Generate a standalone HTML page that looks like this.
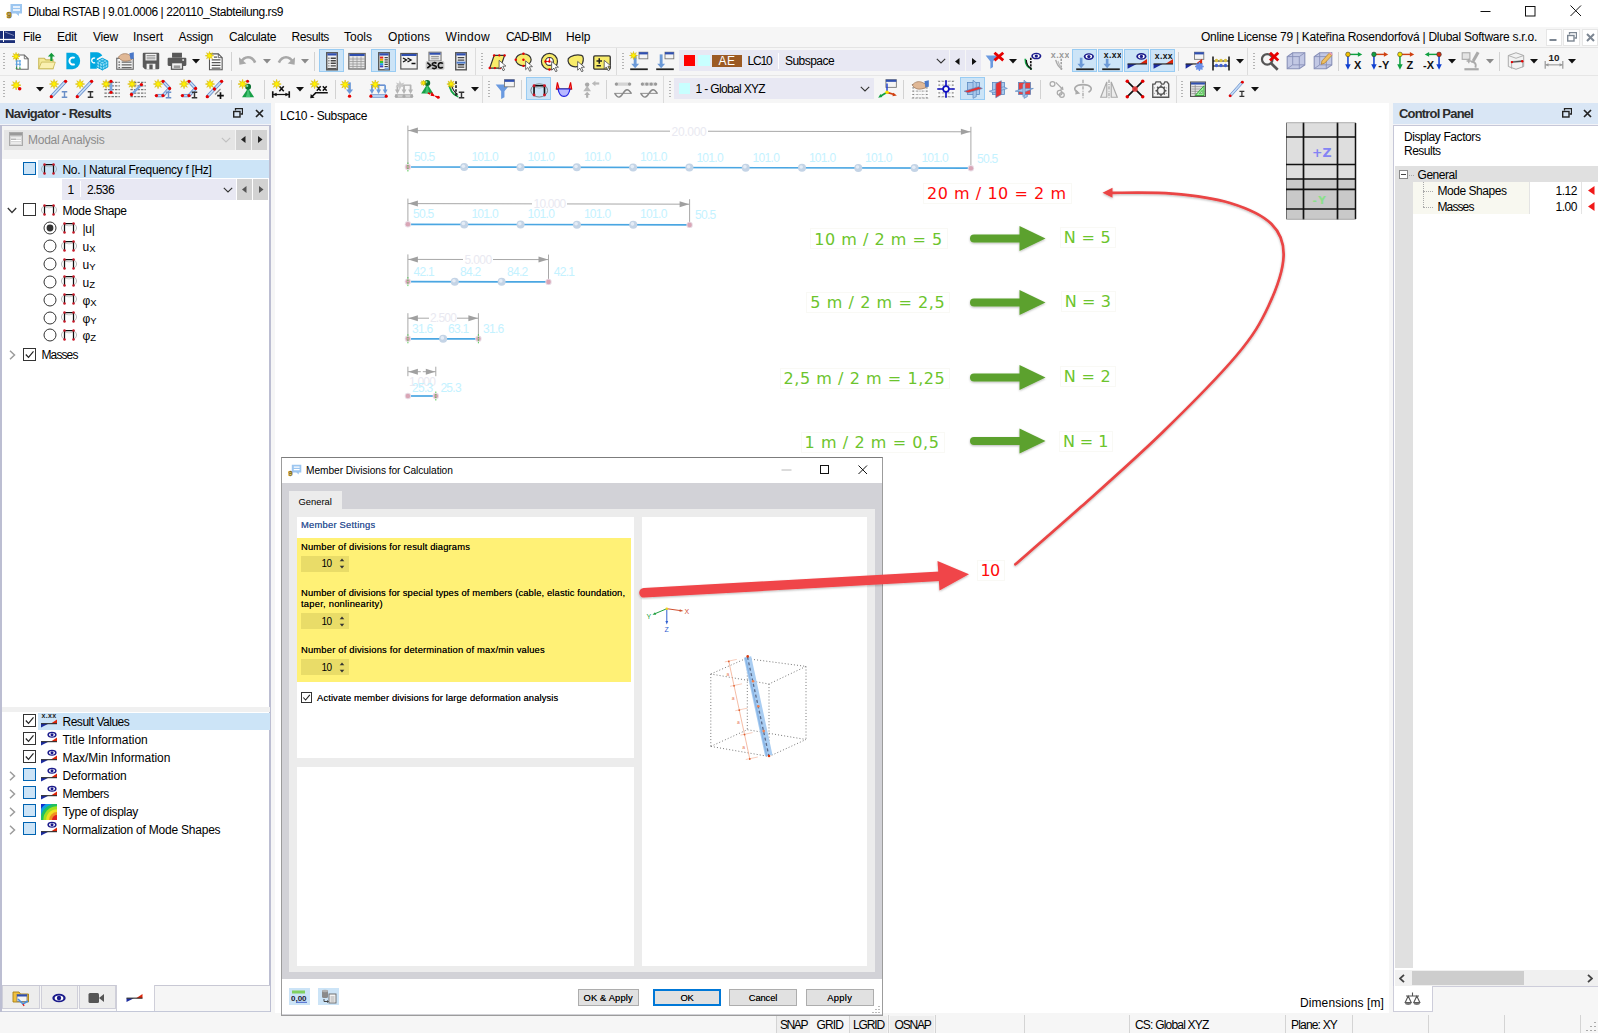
<!DOCTYPE html>
<html lang="en"><head><meta charset="utf-8"><title>Dlubal RSTAB</title><style>
html,body{margin:0;padding:0;background:#f6f6f6;}
#app{position:relative;width:1598px;height:1033px;overflow:hidden;background:#f6f6f6;font-family:"Liberation Sans",sans-serif;font-size:12px;color:#000;}
.b{position:absolute;display:block;}
.t{position:absolute;white-space:pre;font-family:"Liberation Sans",sans-serif;}
</style></head><body><div id="app">
<svg width="0" height="0" style="position:absolute"><defs><filter id="sh" x="-10%" y="-10%" width="120%" height="130%"><feDropShadow dx="0" dy="1" stdDeviation="1.2" flood-color="#000" flood-opacity=".28"/></filter></defs></svg>
<div class="b" style="left:0px;top:0px;width:1598px;height:26.5px;background:#fff;"></div>
<svg class="b" style="left:6px;top:3px;" width="17" height="16" viewBox="0 0 17 16"><path d="M4.500 1h11.500v9.500h-3v2.500l-3-2.500h-5.500z" fill="#9cc6f0"/><path d="M7 4h7M7 7h7" stroke="#fff" stroke-width="1.500"/><text x="0.500" y="15" font-size="9.500" font-weight="bold" fill="#e0b020" stroke="#6a5410" stroke-width=".5" font-family="Liberation Sans, sans-serif">9</text></svg>
<span class="t" style="left:28.0px;top:4.0px;font-size:12px;line-height:16px;color:#000;letter-spacing:-0.414px;">Dlubal RSTAB | 9.01.0006 | 220110_Stabteilung.rs9</span>
<svg class="b" style="left:1480px;top:5px;" width="12" height="12" viewBox="0 0 12 12"><path d="M0.500 6.500h10" stroke="#111" stroke-width="1"/></svg>
<svg class="b" style="left:1525px;top:6px;" width="11" height="11" viewBox="0 0 11 11"><rect x="0.500" y="0.500" width="9.500" height="9.500" fill="none" stroke="#111" stroke-width="1"/></svg>
<svg class="b" style="left:1570px;top:5px;" width="12" height="12" viewBox="0 0 12 12"><path d="M0.500 0.500l10.500 10.500M11 0.500l-10.500 10.500" stroke="#111" stroke-width="1"/></svg>
<div class="b" style="left:0px;top:26.5px;width:1598px;height:21.5px;background:#f6f6f6;"></div>
<div class="b" style="left:0px;top:47px;width:1598px;height:1px;background:#e4e4e4;"></div>
<svg class="b" style="left:0px;top:31px;" width="15" height="12" viewBox="0 0 15 12"><rect x="0" y="0" width="15" height="12" fill="#1c2f78"/><path d="M0 8.500h15" stroke="#fff" stroke-width="1.300"/><path d="M3.500 0v11" stroke="#fff" stroke-width="1"/><path d="M5 1l9 3.500" stroke="#dde" stroke-width=".5"/></svg>
<span class="t" style="left:23.0px;top:28.8px;font-size:12px;line-height:16px;color:#000;letter-spacing:-0.334px;">File</span>
<span class="t" style="left:57.0px;top:28.8px;font-size:12px;line-height:16px;color:#000;letter-spacing:-0.169px;">Edit</span>
<span class="t" style="left:93.0px;top:28.8px;font-size:12px;line-height:16px;color:#000;letter-spacing:-0.198px;">View</span>
<span class="t" style="left:133.0px;top:28.8px;font-size:12px;line-height:16px;color:#000;letter-spacing:-0.002px;">Insert</span>
<span class="t" style="left:178.5px;top:28.8px;font-size:12px;line-height:16px;color:#000;letter-spacing:-0.253px;">Assign</span>
<span class="t" style="left:229.0px;top:28.8px;font-size:12px;line-height:16px;color:#000;letter-spacing:-0.336px;">Calculate</span>
<span class="t" style="left:291.5px;top:28.8px;font-size:12px;line-height:16px;color:#000;letter-spacing:-0.359px;">Results</span>
<span class="t" style="left:344.0px;top:28.8px;font-size:12px;line-height:16px;color:#000;letter-spacing:-0.002px;">Tools</span>
<span class="t" style="left:388.0px;top:28.8px;font-size:12px;line-height:16px;color:#000;letter-spacing:0.092px;">Options</span>
<span class="t" style="left:445.5px;top:28.8px;font-size:12px;line-height:16px;color:#000;letter-spacing:0.304px;">Window</span>
<span class="t" style="left:506.0px;top:28.8px;font-size:12px;line-height:16px;color:#000;letter-spacing:-0.809px;">CAD-BIM</span>
<span class="t" style="left:566.0px;top:28.8px;font-size:12px;line-height:16px;color:#000;letter-spacing:-0.045px;">Help</span>
<span class="t" style="left:1201.0px;top:28.8px;font-size:12px;line-height:16px;color:#000;letter-spacing:-0.249px;">Online License 79 | Kateřina Rosendorfová | Dlubal Software s.r.o.</span>
<div class="b" style="left:1545.5px;top:29px;width:16.5px;height:16.5px;background:#fff;border:1px solid #e6e6e6;box-sizing:border-box;"></div>
<div class="b" style="left:1563px;top:29px;width:16.5px;height:16.5px;background:#fff;border:1px solid #e6e6e6;box-sizing:border-box;"></div>
<div class="b" style="left:1581.5px;top:29px;width:16.5px;height:16.5px;background:#fff;border:1px solid #e6e6e6;box-sizing:border-box;"></div>
<svg class="b" style="left:1549px;top:39px;" width="9" height="3" viewBox="0 0 9 3"><rect x="0.500" y="0" width="7" height="2" fill="#7c8692"/></svg>
<svg class="b" style="left:1566.5px;top:32px;" width="10" height="10" viewBox="0 0 10 10"><path d="M2.500 2.500v-2h7v5.500h-2" fill="none" stroke="#7c8692" stroke-width="1.300"/><rect x="0.700" y="3.500" width="6.300" height="5.500" fill="none" stroke="#7c8692" stroke-width="1.400"/></svg>
<svg class="b" style="left:1585.5px;top:33px;" width="9" height="9" viewBox="0 0 9 9"><path d="M1 1l7 7M8 1l-7 7" stroke="#7c8692" stroke-width="2"/></svg>
<div class="b" style="left:0px;top:48px;width:1598px;height:56px;background:#f6f6f6;"></div>
<div class="b" style="left:0px;top:75px;width:1598px;height:1px;background:#e6e6e6;"></div>
<svg class="b" style="left:3px;top:52px;" width="2" height="20" viewBox="0 0 2 20"><rect x="0" y="1" width="2" height="1" fill="#b4b4b4"/><rect x="0" y="4" width="2" height="1" fill="#b4b4b4"/><rect x="0" y="7" width="2" height="1" fill="#b4b4b4"/><rect x="0" y="10" width="2" height="1" fill="#b4b4b4"/><rect x="0" y="13" width="2" height="1" fill="#b4b4b4"/><rect x="0" y="16" width="2" height="1" fill="#b4b4b4"/></svg>
<svg class="b" style="left:11px;top:51px;" width="20" height="20" viewBox="0 0 20 20"><g transform="translate(10 10) scale(1.1) translate(-9 -9)"><path d="M5 3.5h7l3.5 3.5v9.500h-10.5z" fill="#fff" stroke="#666" stroke-width="1"/><path d="M12 3.500v3.500h3.500" fill="none" stroke="#666" stroke-width=".8"/><path d="M4 9h5M4 12h5M5 8v6M8 8v6" stroke="#58a0e0" stroke-width="1"/><path d="M5 14l-1 2h2zM8 14l-1 2h2z" fill="#30a040"/><polygon points="4.50,1.20 5.08,3.40 7.05,2.25 5.90,4.22 8.10,4.80 5.90,5.38 7.05,7.35 5.08,6.20 4.50,8.40 3.92,6.20 1.95,7.35 3.10,5.38 0.90,4.80 3.10,4.22 1.95,2.25 3.92,3.40" fill="#fff200" stroke="#d4b400" stroke-width=".5"/></g></svg>
<svg class="b" style="left:37px;top:51px;" width="20" height="20" viewBox="0 0 20 20"><g transform="translate(10 10) scale(1.1) translate(-9 -9)"><path d="M1.500 6.500h5l1.500 1.500h6.500v8h-13z" fill="#f5ea9a" stroke="#c9b95a" stroke-width="1"/><path d="M1.500 16l2.500-6h12.500l-2 6z" fill="#faf0b0" stroke="#c9b95a" stroke-width=".8"/><path d="M12 9v-4h-2.200l3.200-3.600 3.200 3.600h-2.200v4z" fill="#149a3c"/></g></svg>
<svg class="b" style="left:63px;top:51px;" width="20" height="20" viewBox="0 0 20 20"><g transform="translate(10 10) scale(1.1) translate(-9 -9)"><path d="M3 1.500h5.500a7 7.500 0 0 1 0 15h-5.500z" fill="#00a8e0"/><path d="M10.500 6.200a3.200 3.200 0 1 0 0 5.600" fill="none" stroke="#fff" stroke-width="1.800"/></g></svg>
<svg class="b" style="left:89px;top:51px;" width="20" height="20" viewBox="0 0 20 20"><g transform="translate(10 10) scale(1.1) translate(-9 -9)"><path d="M1 1h6a6 6 0 0 1 5 3l-5 3v9h-6z" fill="#00a8e0"/><path d="M7 9l5-2.500 5 2.500v5.500l-5 2.500-5-2.500z" fill="#8fdcf5" stroke="#00a0d8" stroke-width=".9"/><path d="M7 9l5 2.500 5-2.500M12 11.500v6M9.500 7.800l5 2.500v5.800M14.500 7.800l-5 2.500v5.800M7 11.800l5 2.600 5-2.600" fill="none" stroke="#00a0d8" stroke-width=".7"/><path d="M5.500 6.500a2.200 2.200 0 1 0 0 4" fill="none" stroke="#fff" stroke-width="1.200"/></g></svg>
<svg class="b" style="left:115px;top:51px;" width="20" height="20" viewBox="0 0 20 20"><g transform="translate(10 10) scale(1.1) translate(-9 -9)"><rect x="1.500" y="6.500" width="15" height="10" fill="#f0f0f0" stroke="#666" stroke-width="1"/><path d="M6 10h9M6 12.500h9M6 15h9" stroke="#666" stroke-width="1.200"/><path d="M3 10h1.500M3 12.500h1.500M3 15h1.500" stroke="#666" stroke-width="1.200"/><path d="M3 5.500c2-3 6-4 9-2.500l3 1.500v3.500l-4 1c-3 .5-6-.5-8-3.500z" fill="#e0b896" stroke="#a07858" stroke-width=".7"/><path d="M13 2l4-1v6l-3 .5z" fill="#4a78c8"/></g></svg>
<svg class="b" style="left:141px;top:51px;" width="20" height="20" viewBox="0 0 20 20"><g transform="translate(10 10) scale(1.1) translate(-9 -9)"><path d="M1.500 2.500a1 1 0 0 1 1-1h13a1 1 0 0 1 1 1v13a1 1 0 0 1-1 1h-12l-2-2z" fill="#595959"/><rect x="4" y="2.500" width="10" height="6" fill="#f4f4f4"/><path d="M5 4h8M5 5.500h8M5 7h8" stroke="#8a8a8a" stroke-width=".8"/><rect x="5" y="11.500" width="8" height="5" fill="#f4f4f4"/><rect x="7.500" y="12.200" width="3" height="4.300" fill="#595959"/></g></svg>
<svg class="b" style="left:167px;top:51px;" width="20" height="20" viewBox="0 0 20 20"><g transform="translate(10 10) scale(1.1) translate(-9 -9)"><rect x="4.500" y="1.500" width="9" height="4.500" fill="#595959"/><rect x="0.500" y="6" width="17" height="7.500" rx="1" fill="#595959"/><rect x="4" y="10.500" width="10" height="6" fill="#f4f4f4" stroke="#595959" stroke-width="1.200"/><rect x="6" y="13" width="6" height="2.500" fill="#9a9a9a"/><rect x="13.800" y="7.500" width="1.600" height="1.200" fill="#fff"/></g></svg>
<svg class="b" style="left:205px;top:51px;" width="20" height="20" viewBox="0 0 20 20"><g transform="translate(10 10) scale(1.1) translate(-9 -9)"><path d="M4 2.500h8l3.500 3.500v11h-11.500z" fill="#fff" stroke="#555" stroke-width="1"/><path d="M12 2.500v3.500h3.500" fill="none" stroke="#555" stroke-width=".8"/><path d="M6 8h8M6 10.500h8M6 13h8M6 15.500h8M11 5.500h-3" stroke="#555" stroke-width="1"/><polygon points="4.00,0.40 4.61,2.73 6.69,1.51 5.47,3.59 7.80,4.20 5.47,4.81 6.69,6.89 4.61,5.67 4.00,8.00 3.39,5.67 1.31,6.89 2.53,4.81 0.20,4.20 2.53,3.59 1.31,1.51 3.39,2.73" fill="#fff200" stroke="#d4b400" stroke-width=".5"/></g></svg>
<svg class="b" style="left:191.5px;top:59px;" width="8" height="5" viewBox="0 0 8 5"><polygon points="0,0 8,0 4,4.500" fill="#111"/></svg>
<div class="b" style="left:231px;top:52px;width:1px;height:19px;background:#d2d2d2;"></div>
<svg class="b" style="left:238px;top:51px;" width="20" height="20" viewBox="0 0 20 20"><g transform="translate(10 10) scale(1.1) translate(-9 -9)"><path d="M2.500 10.500c3-6.500 10-6.500 13 0" fill="none" stroke="#a8a8a8" stroke-width="2.400"/><polygon points="0.800,5.500 1.200,12.300 7.500,11.300" fill="#a8a8a8"/></g></svg>
<svg class="b" style="left:263px;top:59px;" width="8" height="5" viewBox="0 0 8 5"><polygon points="0,0 8,0 4,4.500" fill="#8a8a8a"/></svg>
<svg class="b" style="left:276px;top:51px;" width="20" height="20" viewBox="0 0 20 20"><g transform="translate(10 10) scale(1.1) translate(-9 -9)"><path d="M15.500 10.500c-3-6.500-10-6.500-13 0" fill="none" stroke="#a8a8a8" stroke-width="2.400"/><polygon points="17.200,5.500 16.800,12.300 10.500,11.300" fill="#a8a8a8"/></g></svg>
<svg class="b" style="left:300.5px;top:59px;" width="8" height="5" viewBox="0 0 8 5"><polygon points="0,0 8,0 4,4.500" fill="#8a8a8a"/></svg>
<div class="b" style="left:314px;top:52px;width:1px;height:19px;background:#d2d2d2;"></div>
<div class="b" style="left:319px;top:49px;width:25px;height:23px;background:#cce4f7;border:1px solid #99ccf3;box-sizing:border-box;"></div>
<svg class="b" style="left:321.5px;top:51px;" width="20" height="20" viewBox="0 0 20 20"><g transform="translate(10 10) scale(1.1) translate(-9 -9)"><rect x="4.200" y="1.500" width="9.600" height="15.500" fill="#f2f2f2" stroke="#5a5a5a" stroke-width="1.300"/><rect x="4.800" y="2" width="8.400" height="2" fill="#2f4fb0"/><path d="M7.800 6.500h4.700M7.800 8.800h4.700M7.800 11.100h4.700M7.800 13.400h4.700" stroke="#444" stroke-width="1.300"/><path d="M5.500 6.500h1.300M5.500 8.800h1.300M5.500 11.100h1.300M5.500 13.400h1.300" stroke="#888" stroke-width="1.200"/><path d="M4.800 16h8.400" stroke="#555" stroke-width="1.400"/></g></svg>
<svg class="b" style="left:347px;top:51px;" width="20" height="20" viewBox="0 0 20 20"><g transform="translate(10 10) scale(1) translate(-9 -9)"><rect x="0.800" y="1.500" width="16.400" height="15.500" fill="#e4e4e4" stroke="#666" stroke-width="1.200"/><rect x="1.400" y="2" width="15.200" height="2" fill="#2f4fb0"/><path d="M1 7h16M1 9.500h16M1 12h16M1 14.500h16M5 4.500v12M9 4.500v12M13 4.500v12" stroke="#9a9a9a" stroke-width=".8"/></g></svg>
<div class="b" style="left:371px;top:49px;width:25px;height:23px;background:#cce4f7;border:1px solid #99ccf3;box-sizing:border-box;"></div>
<svg class="b" style="left:373.5px;top:51px;" width="20" height="20" viewBox="0 0 20 20"><g transform="translate(10 10) scale(1.1) translate(-9 -9)"><rect x="4.200" y="1.500" width="9.600" height="15.500" fill="#f2f2f2" stroke="#5a5a5a" stroke-width="1.300"/><rect x="4.800" y="2" width="8.400" height="2" fill="#2f4fb0"/><rect x="5.300" y="5" width="3" height="1.800" fill="#e02020"/><rect x="5.300" y="7" width="3" height="1.800" fill="#f0a000"/><rect x="5.300" y="9" width="3" height="1.800" fill="#30c030"/><rect x="5.300" y="11" width="3" height="1.800" fill="#20a0e0"/><rect x="5.300" y="13" width="3" height="1.800" fill="#4040c0"/><path d="M9.500 6h3M9.500 8h3M9.500 10h3M9.500 12h3M9.500 14h3" stroke="#444" stroke-width="1.100"/><rect x="9.500" y="15" width="4" height="1.800" fill="#7aa0d8"/></g></svg>
<svg class="b" style="left:398.8px;top:51px;" width="20" height="20" viewBox="0 0 20 20"><g transform="translate(10 10) scale(1) translate(-9 -9)"><rect x="0.800" y="1.500" width="16.400" height="15.500" fill="#f2f2f2" stroke="#555" stroke-width="1.200"/><rect x="1.400" y="2" width="15.200" height="2" fill="#2f4fb0"/><path d="M3 6l3.500 2-3.500 2M7.500 6l3.500 2-3.500 2M11.500 11.500h4" fill="none" stroke="#111" stroke-width="1.400"/></g></svg>
<svg class="b" style="left:425px;top:51px;" width="20" height="20" viewBox="0 0 20 20"><g transform="translate(10 10) scale(1.1) translate(-9 -9)"><rect x="3.500" y="1" width="11" height="8" fill="#e8e8e8" stroke="#777" stroke-width="1"/><rect x="4" y="1.500" width="10" height="1.800" fill="#2f4fb0"/><path d="M5.500 5h7M5.500 7h7" stroke="#999" stroke-width="1"/><rect x="0.500" y="9" width="17" height="8" rx="1.500" fill="#c8c8c8"/><path d="M2 10.500l3 2.500-3 2.500" fill="none" stroke="#111" stroke-width="1.500"/><path d="M10.300 11.300c-1-1.200-3.800-1-3.800.6s3.800 1 3.800 2.600-2.800 1.800-3.800.6" fill="none" stroke="#111" stroke-width="1.500"/><path d="M16 11.500c-1-1.400-4-1.200-4 1.500s3 2.900 4 1.500" fill="none" stroke="#111" stroke-width="1.500"/></g></svg>
<svg class="b" style="left:451px;top:51px;" width="20" height="20" viewBox="0 0 20 20"><g transform="translate(10 10) scale(1.1) translate(-9 -9)"><rect x="4.200" y="1.500" width="9.600" height="15.500" fill="#f2f2f2" stroke="#5a5a5a" stroke-width="1.300"/><rect x="4.800" y="2" width="8.400" height="2" fill="#2f4fb0"/><path d="M6 6h6M6 8.200h6M6 12.400h6M6 14.600h6" stroke="#444" stroke-width="1.200"/><rect x="5" y="9.600" width="8" height="1.800" fill="#4a78c8"/></g></svg>
<div class="b" style="left:475px;top:48px;width:1px;height:27px;background:#dcdcdc;"></div>
<svg class="b" style="left:480.5px;top:52px;" width="2" height="20" viewBox="0 0 2 20"><rect x="0" y="1" width="2" height="1" fill="#b4b4b4"/><rect x="0" y="4" width="2" height="1" fill="#b4b4b4"/><rect x="0" y="7" width="2" height="1" fill="#b4b4b4"/><rect x="0" y="10" width="2" height="1" fill="#b4b4b4"/><rect x="0" y="13" width="2" height="1" fill="#b4b4b4"/><rect x="0" y="16" width="2" height="1" fill="#b4b4b4"/></svg>
<svg class="b" style="left:488px;top:51.8px;" width="20" height="20" viewBox="0 0 20 20"><g transform="translate(10 10) scale(1.1) translate(-9 -9)"><polygon points="5.500,3 15,3 11,14.500 1.500,14.500" fill="#f8ec6a" stroke="#333" stroke-width="1.100"/><circle cx="5.5" cy="3" r="1.1" fill="#e60000"/><circle cx="15" cy="3" r="1.1" fill="#e60000"/><circle cx="11" cy="14.5" r="1.1" fill="#e60000"/><circle cx="1.5" cy="14.5" r="1.1" fill="#e60000"/><circle cx="10.2" cy="3" r="1" fill="#e60000"/><circle cx="6.2" cy="14.5" r="1" fill="#e60000"/><path d="M10 7.5l0 8 2-2 1.6 3.4 1.4-.7-1.6-3.3 2.8-.2z" fill="#fff" stroke="#444" stroke-width=".7"/></g></svg>
<svg class="b" style="left:514px;top:51.8px;" width="20" height="20" viewBox="0 0 20 20"><g transform="translate(10 10) scale(1.1) translate(-9 -9)"><ellipse cx="8.500" cy="7" rx="7" ry="5.500" fill="#f8ec6a" stroke="#333" stroke-width="1.100"/><circle cx="8.5" cy="1.5" r="1.1" fill="#e60000"/><circle cx="1.5" cy="7" r="1.1" fill="#e60000"/><circle cx="8.5" cy="7" r="1.1" fill="#e60000"/><circle cx="8.5" cy="12.5" r="1.1" fill="#e60000"/><path d="M10.5 8l0 8 2-2 1.6 3.4 1.4-.7-1.6-3.3 2.8-.2z" fill="#fff" stroke="#444" stroke-width=".7"/></g></svg>
<svg class="b" style="left:540px;top:51.8px;" width="20" height="20" viewBox="0 0 20 20"><g transform="translate(10 10) scale(1.1) translate(-9 -9)"><circle cx="8.500" cy="8.500" r="7.300" fill="#f8ec6a" stroke="#333" stroke-width="1.100"/><circle cx="8.500" cy="8.500" r="3.600" fill="#fff" stroke="#333" stroke-width="1"/><circle cx="8.5" cy="8.5" r="1.1" fill="#e60000"/><circle cx="4.9" cy="8.5" r="1.1" fill="#e60000"/><circle cx="8.5" cy="15.8" r="1.1" fill="#e60000"/><path d="M5 8.500h4M8.500 8.500v-3" stroke="#e60000" stroke-width=".8"/><path d="M10.5 8.5l0 8 2-2 1.6 3.4 1.4-.7-1.6-3.3 2.8-.2z" fill="#fff" stroke="#444" stroke-width=".7"/></g></svg>
<svg class="b" style="left:566px;top:51.8px;" width="20" height="20" viewBox="0 0 20 20"><g transform="translate(10 10) scale(1.1) translate(-9 -9)"><path d="M2 6c2-3 8-4 12-3 2 .5 2 4 1 7s-6 4-9 3-5-4-4-7z" fill="#f8ec6a" stroke="#333" stroke-width="1.100"/><path d="M10.5 8.5l0 8 2-2 1.6 3.4 1.4-.7-1.6-3.3 2.8-.2z" fill="#fff" stroke="#444" stroke-width=".7"/></g></svg>
<svg class="b" style="left:592px;top:51.8px;" width="20" height="20" viewBox="0 0 20 20"><g transform="translate(10 10) scale(1.1) translate(-9 -9)"><rect x="1.500" y="3.500" width="15" height="12" rx="1" fill="#f8ec6a" stroke="#333" stroke-width="1.200"/><path d="M4 8h5M6.500 5.500v5M4 12.500h4" stroke="#222" stroke-width="1.400"/><path d="M11 7.5l0 8 2-2 1.6 3.4 1.4-.7-1.6-3.3 2.8-.2z" fill="#fff" stroke="#444" stroke-width=".7"/></g></svg>
<div class="b" style="left:616px;top:48px;width:1px;height:27px;background:#dcdcdc;"></div>
<svg class="b" style="left:621.5px;top:52px;" width="2" height="20" viewBox="0 0 2 20"><rect x="0" y="1" width="2" height="1" fill="#b4b4b4"/><rect x="0" y="4" width="2" height="1" fill="#b4b4b4"/><rect x="0" y="7" width="2" height="1" fill="#b4b4b4"/><rect x="0" y="10" width="2" height="1" fill="#b4b4b4"/><rect x="0" y="13" width="2" height="1" fill="#b4b4b4"/><rect x="0" y="16" width="2" height="1" fill="#b4b4b4"/></svg>
<svg class="b" style="left:629px;top:51px;" width="20" height="20" viewBox="0 0 20 20"><g transform="translate(10 10) scale(1.1) translate(-9 -9)"><rect x="9" y="1" width="8" height="6" fill="#f4f4f4" stroke="#777" stroke-width=".8"/><rect x="9" y="1" width="8" height="2" fill="#2f4fb0"/><path d="M1 16.500h16" stroke="#222" stroke-width="1.600"/><path d="M5.5 4V12.5" stroke="#6c9ad8" stroke-width="2.6"/><polygon points="1.9,11.5 9.1,11.5 5.5,15.5" fill="#6c9ad8"/><polygon points="4.00,0.40 4.58,2.60 6.55,1.45 5.40,3.42 7.60,4.00 5.40,4.58 6.55,6.55 4.58,5.40 4.00,7.60 3.42,5.40 1.45,6.55 2.60,4.58 0.40,4.00 2.60,3.42 1.45,1.45 3.42,2.60" fill="#fff200" stroke="#d4b400" stroke-width=".5"/></g></svg>
<svg class="b" style="left:655px;top:51px;" width="20" height="20" viewBox="0 0 20 20"><g transform="translate(10 10) scale(1.1) translate(-9 -9)"><rect x="9" y="1" width="8" height="6" fill="#f4f4f4" stroke="#777" stroke-width=".8"/><rect x="9" y="1" width="8" height="2" fill="#2f4fb0"/><path d="M1 16.500h16" stroke="#222" stroke-width="1.600"/><path d="M5.5 3V12.5" stroke="#6c9ad8" stroke-width="2.6"/><polygon points="1.9,11.5 9.1,11.5 5.5,15.5" fill="#6c9ad8"/></g></svg>
<div class="b" style="left:679px;top:50px;width:270px;height:21px;background:#e8e8f3;"></div>
<div class="b" style="left:684px;top:55px;width:11px;height:11px;background:#ff0000;"></div>
<div class="b" style="left:698px;top:55px;width:11.5px;height:11px;background:#c8ffff;"></div>
<div class="b" style="left:712px;top:54.5px;width:30px;height:12.5px;background:#9c5a24;"></div>
<span class="t" style="left:718.5px;top:53.0px;font-size:12px;line-height:16px;color:#fff;letter-spacing:0.496px;">AE</span>
<span class="t" style="left:747.5px;top:53.0px;font-size:12px;line-height:16px;color:#000;letter-spacing:-1.171px;">LC10</span>
<div class="b" style="left:778px;top:53px;width:1px;height:16px;background:#fff;"></div>
<span class="t" style="left:785.0px;top:53.0px;font-size:12px;line-height:16px;color:#000;letter-spacing:-0.546px;">Subspace</span>
<svg class="b" style="left:935.5px;top:58px;" width="10" height="7" viewBox="0 0 10 7"><path d="M0.800 0.800l4.200 4.200 4.200-4.200" fill="none" stroke="#333" stroke-width="1.100"/></svg>
<div class="b" style="left:950px;top:50px;width:15px;height:21px;background:#e8e8f3;"></div>
<svg class="b" style="left:954.5px;top:57.5px;" width="5" height="8" viewBox="0 0 5 8"><polygon points="4.500,0 0,3.500 4.500,7" fill="#111"/></svg>
<div class="b" style="left:966px;top:50px;width:15px;height:21px;background:#e8e8f3;"></div>
<svg class="b" style="left:971.5px;top:57.5px;" width="5" height="8" viewBox="0 0 5 8"><polygon points="0,0 4.500,3.500 0,7" fill="#111"/></svg>
<svg class="b" style="left:985px;top:51px;" width="20" height="20" viewBox="0 0 20 20"><g transform="translate(10 10) scale(1.1) translate(-9 -9)"><path d="M0.500 4h11l-4.300 5.500v5l-2.400 1.500v-6.500z" fill="#6a9ae0"/><path d="M8.500 1.500l8 7M16.500 1.500l-8 7" stroke="#e60000" stroke-width="2.600"/></g></svg>
<svg class="b" style="left:1008.5px;top:59px;" width="8" height="5" viewBox="0 0 8 5"><polygon points="0,0 8,0 4,4.500" fill="#111"/></svg>
<svg class="b" style="left:1023px;top:51px;" width="20" height="20" viewBox="0 0 20 20"><g transform="translate(10 10) scale(1.1) translate(-9 -9)"><path d="M2 7c0 5 2 8 6 9.500" fill="none" stroke="#10a040" stroke-width="1.600"/><path d="M7 6v11" stroke="#111" stroke-width="1.500" stroke-dasharray="2 1"/><path d="M3 8c0 3 1.500 6 4 7.500" fill="none" stroke="#111" stroke-width="1"/><ellipse cx="12" cy="4.5" rx="4.6" ry="3" fill="#1c1c8c"/><ellipse cx="12" cy="4.5" rx="3" ry="1.8" fill="#fff"/><circle cx="12" cy="4.5" r="1.5" fill="#1c1c8c"/></g></svg>
<svg class="b" style="left:1049px;top:51px;" width="20" height="20" viewBox="0 0 20 20"><g transform="translate(10 10) scale(1.1) translate(-9 -9)"><text x="1.5" y="6.41" font-size="8.19" font-weight="bold" fill="#9a9a9a" font-family="Liberation Sans, sans-serif" letter-spacing=".35">x.xx</text><path d="M6 8c1 4 3 7 6 8.500" fill="none" stroke="#aaa" stroke-width="1.300"/><path d="M11 7v10" stroke="#999" stroke-width="1.300" stroke-dasharray="2 1"/><path d="M8 9c1 3 2 5 3.500 6" fill="none" stroke="#bbb" stroke-width="1"/></g></svg>
<div class="b" style="left:1072px;top:49px;width:25px;height:23px;background:#cce4f7;border:1px solid #99ccf3;box-sizing:border-box;"></div>
<svg class="b" style="left:1074.5px;top:51px;" width="20" height="20" viewBox="0 0 20 20"><g transform="translate(10 10) scale(1.1) translate(-9 -9)"><path d="M1 16.500h16" stroke="#222" stroke-width="1.600"/><path d="M5.5 6V12.5" stroke="#6c9ad8" stroke-width="2.4"/><polygon points="2.1,11.5 8.9,11.5 5.5,15.5" fill="#6c9ad8"/><ellipse cx="12.5" cy="5" rx="4.6" ry="3" fill="#1c1c8c"/><ellipse cx="12.5" cy="5" rx="3" ry="1.8" fill="#fff"/><circle cx="12.5" cy="5" r="1.5" fill="#1c1c8c"/></g></svg>
<div class="b" style="left:1098px;top:49px;width:25px;height:23px;background:#cce4f7;border:1px solid #99ccf3;box-sizing:border-box;"></div>
<svg class="b" style="left:1100.5px;top:51px;" width="20" height="20" viewBox="0 0 20 20"><g transform="translate(10 10) scale(1.1) translate(-9 -9)"><path d="M1 16.500h16" stroke="#222" stroke-width="1.600"/><path d="M5.5 7V12.5" stroke="#6c9ad8" stroke-width="2.4"/><polygon points="2.1,11.5 8.9,11.5 5.5,15.5" fill="#6c9ad8"/><text x="2.5" y="6.7" font-size="7.8" font-weight="bold" fill="#111" font-family="Liberation Sans, sans-serif" letter-spacing=".35">x.xx</text></g></svg>
<div class="b" style="left:1124px;top:49px;width:25px;height:23px;background:#cce4f7;border:1px solid #99ccf3;box-sizing:border-box;"></div>
<svg class="b" style="left:1126.5px;top:51px;" width="20" height="20" viewBox="0 0 20 20"><g transform="translate(10 10) scale(1.1) translate(-9 -9)"><polygon points="0.4,11.68 0.4,16 8.68,11.68" fill="#1c2ca0"/><polygon points="11.2,11.68 18.4,11.68 18.4,7" fill="#dc2408"/><path d="M0.4 11.68H18.4" stroke="#2a2a2a" stroke-width="1.100"/><ellipse cx="13" cy="4.8" rx="4.6" ry="3" fill="#1c1c8c"/><ellipse cx="13" cy="4.8" rx="3" ry="1.8" fill="#fff"/><circle cx="13" cy="4.8" r="1.5" fill="#1c1c8c"/></g></svg>
<div class="b" style="left:1150px;top:49px;width:25px;height:23px;background:#cce4f7;border:1px solid #99ccf3;box-sizing:border-box;"></div>
<svg class="b" style="left:1152.5px;top:51px;" width="20" height="20" viewBox="0 0 20 20"><g transform="translate(10 10) scale(1.1) translate(-9 -9)"><polygon points="0.4,11.68 0.4,16 8.68,11.68" fill="#1c2ca0"/><polygon points="11.2,11.68 18.4,11.68 18.4,7" fill="#dc2408"/><path d="M0.4 11.68H18.4" stroke="#2a2a2a" stroke-width="1.100"/><text x="1.5" y="6.8" font-size="7.8" font-weight="bold" fill="#111" font-family="Liberation Sans, sans-serif" letter-spacing=".35">x.xx</text></g></svg>
<div class="b" style="left:1178px;top:52px;width:1px;height:19px;background:#d2d2d2;"></div>
<svg class="b" style="left:1185px;top:51px;" width="20" height="20" viewBox="0 0 20 20"><g transform="translate(10 10) scale(1.1) translate(-9 -9)"><rect x="8.5" y="1" width="8.5" height="6.5" fill="#f4f4f4" stroke="#777" stroke-width=".8"/><rect x="8.5" y="1" width="8.5" height="2" fill="#2f4fb0"/><polygon points="0.5,11.68 0.5,16 7.4,11.68" fill="#1c2ca0"/><polygon points="9.5,11.68 15.5,11.68 15.5,7" fill="#dc2408"/><path d="M0.5 11.68H15.5" stroke="#2a2a2a" stroke-width="1.100"/><circle cx="13" cy="14" r="3" fill="#6a8fe8"/><circle cx="13" cy="14" r="1.200" fill="#fff"/><path d="M13 10v8M9 14h8M10.200 11.200l5.600 5.600M15.800 11.200l-5.600 5.600" stroke="#6a8fe8" stroke-width="1.200"/></g></svg>
<svg class="b" style="left:1211px;top:51.5px;" width="20" height="20" viewBox="0 0 20 20"><g transform="translate(10 10) scale(1) translate(-9 -9)"><path d="M1 3.500v14M17 3.500v14" stroke="#111" stroke-width="1.500"/><path d="M1 8h16M1 13h16" stroke="#111" stroke-width="1.100"/><circle cx="4.5" cy="7.5" r="1.7" fill="#d8c040"/><circle cx="9" cy="7.5" r="1.7" fill="#d8c040"/><circle cx="13.5" cy="7.5" r="1.7" fill="#d8c040"/><circle cx="4.5" cy="12.5" r="1.7" fill="#4060d0"/><circle cx="9" cy="12.5" r="1.7" fill="#4060d0"/><circle cx="13.5" cy="12.5" r="1.7" fill="#4060d0"/></g></svg>
<svg class="b" style="left:1235.5px;top:59px;" width="8" height="5" viewBox="0 0 8 5"><polygon points="0,0 8,0 4,4.500" fill="#111"/></svg>
<div class="b" style="left:1247px;top:48px;width:1px;height:27px;background:#dcdcdc;"></div>
<svg class="b" style="left:1252.5px;top:52px;" width="2" height="20" viewBox="0 0 2 20"><rect x="0" y="1" width="2" height="1" fill="#b4b4b4"/><rect x="0" y="4" width="2" height="1" fill="#b4b4b4"/><rect x="0" y="7" width="2" height="1" fill="#b4b4b4"/><rect x="0" y="10" width="2" height="1" fill="#b4b4b4"/><rect x="0" y="13" width="2" height="1" fill="#b4b4b4"/><rect x="0" y="16" width="2" height="1" fill="#b4b4b4"/></svg>
<svg class="b" style="left:1260px;top:51px;" width="20" height="20" viewBox="0 0 20 20"><g transform="translate(10 10) scale(1.1) translate(-9 -9)"><circle cx="6.500" cy="7.500" r="4.800" fill="none" stroke="#555" stroke-width="2"/><path d="M10 11l6 6" stroke="#555" stroke-width="2.400"/><path d="M9 1.500l7.500 7M16.500 1.500l-7.500 7" stroke="#e60000" stroke-width="2.600"/></g></svg>
<svg class="b" style="left:1286px;top:51px;" width="20" height="20" viewBox="0 0 20 20"><g transform="translate(10 10) scale(1.1) translate(-9 -9)"><path d="M1 5l5-3.500h11v11l-5 3.500h-11z" fill="#c2c8e4" stroke="#8890b8" stroke-width="1"/><path d="M1 5h11v11M12 5l5-3.500M6 1.500v11l-5 3.500M6 12.500h11" fill="none" stroke="#8890b8" stroke-width=".8"/></g></svg>
<svg class="b" style="left:1313px;top:51px;" width="20" height="20" viewBox="0 0 20 20"><g transform="translate(10 10) scale(1.1) translate(-9 -9)"><path d="M1 5l5-3.500h11v11l-5 3.500h-11z" fill="#c2c8e4" stroke="#8890b8" stroke-width="1"/><path d="M1 5h11v11M12 5l5-3.500M6 1.500v11l-5 3.500M6 12.500h11" fill="none" stroke="#8890b8" stroke-width=".8"/><path d="M8 9l6.500-7 2.500 2-6.500 7-3 1z" fill="#f0c060" stroke="#b08030" stroke-width=".7"/><path d="M14.500 2l2.500 2 .8-1.200-2.300-2z" fill="#f0a0b0"/></g></svg>
<div class="b" style="left:1338px;top:52px;width:1px;height:19px;background:#d2d2d2;"></div>
<svg class="b" style="left:1344px;top:51px;" width="20" height="20" viewBox="0 0 20 20"><g transform="translate(10 10) scale(1.1) translate(-9 -9)"><path d="M3.500 3h10" stroke="#10a040" stroke-width="1.300"/><polygon points="12.500,0.800 16.500,3 12.500,5.200" fill="#10a040"/><path d="M3.500 3v10" stroke="#1040d0" stroke-width="1.400"/><polygon points="1,12 6,12 3.500,17" fill="#1040d0"/><circle cx="3.500" cy="3" r="2.100" fill="#f0c000" stroke="#333" stroke-width=".5"/><text x="9" y="16.500" font-size="10" font-weight="bold" fill="#111" text-anchor="start" font-family="Liberation Sans, sans-serif">X</text></g></svg>
<svg class="b" style="left:1370px;top:51px;" width="20" height="20" viewBox="0 0 20 20"><g transform="translate(10 10) scale(1.1) translate(-9 -9)"><path d="M3.500 3h10" stroke="#d04010" stroke-width="1.300"/><polygon points="12.500,0.800 16.500,3 12.500,5.200" fill="#d04010"/><path d="M3.500 3v10" stroke="#1040d0" stroke-width="1.400"/><polygon points="1,12 6,12 3.500,17" fill="#1040d0"/><circle cx="3.500" cy="3" r="2.100" fill="#10a040" stroke="#333" stroke-width=".5"/><text x="7.5" y="16.500" font-size="10" font-weight="bold" fill="#111" text-anchor="start" font-family="Liberation Sans, sans-serif">-Y</text></g></svg>
<svg class="b" style="left:1396px;top:51px;" width="20" height="20" viewBox="0 0 20 20"><g transform="translate(10 10) scale(1.1) translate(-9 -9)"><path d="M3.500 3h10" stroke="#d04010" stroke-width="1.300"/><polygon points="12.500,0.800 16.500,3 12.500,5.200" fill="#d04010"/><path d="M3.500 3v10" stroke="#10a040" stroke-width="1.400"/><polygon points="1,12 6,12 3.500,17" fill="#10a040"/><circle cx="3.500" cy="3" r="2.100" fill="#f0e000" stroke="#333" stroke-width=".5"/><text x="9.5" y="16.500" font-size="10" font-weight="bold" fill="#111" text-anchor="start" font-family="Liberation Sans, sans-serif">Z</text></g></svg>
<svg class="b" style="left:1423px;top:51px;" width="20" height="20" viewBox="0 0 20 20"><g transform="translate(10 10) scale(1.1) translate(-9 -9)"><path d="M14.500 3h-10" stroke="#10a040" stroke-width="1.300"/><polygon points="5.500,0.800 1.500,3 5.500,5.200" fill="#10a040"/><path d="M14.500 3v10" stroke="#1040d0" stroke-width="1.400"/><polygon points="12,12 17,12 14.500,17" fill="#1040d0"/><circle cx="14.500" cy="3" r="2.100" fill="#d03010" stroke="#333" stroke-width=".5"/><text x="0" y="16.500" font-size="10" font-weight="bold" fill="#111" text-anchor="start" font-family="Liberation Sans, sans-serif">-X</text></g></svg>
<svg class="b" style="left:1447.5px;top:59px;" width="8" height="5" viewBox="0 0 8 5"><polygon points="0,0 8,0 4,4.500" fill="#111"/></svg>
<svg class="b" style="left:1461px;top:51px;" width="20" height="20" viewBox="0 0 20 20"><g transform="translate(10 10) scale(1.1) translate(-9 -9)"><rect x="1" y="1.500" width="7" height="6" fill="#e4e4e4" stroke="#aaa" stroke-width="1"/><path d="M5 9h4M7 7v4" stroke="#aaa" stroke-width="1.200"/><path d="M15.500 1l-4.500 8" stroke="#aaa" stroke-width="2.800"/><path d="M9 9.500c4 0 5 3 4 5.500" fill="none" stroke="#aaa" stroke-width="1.800"/><path d="M3 16.500h13" stroke="#aaa" stroke-width="2"/></g></svg>
<svg class="b" style="left:1485.5px;top:59px;" width="8" height="5" viewBox="0 0 8 5"><polygon points="0,0 8,0 4,4.500" fill="#8a8a8a"/></svg>
<div class="b" style="left:1499px;top:52px;width:1px;height:19px;background:#d2d2d2;"></div>
<svg class="b" style="left:1505.5px;top:51px;" width="20" height="20" viewBox="0 0 20 20"><g transform="translate(10 10) scale(1.1) translate(-9 -9)"><path d="M2 4l7-2.500 7 2.500v10l-7 2.500-7-2.500z" fill="#f2f2f2" stroke="#aaa" stroke-width=".9"/><path d="M2 4l7 2.500 7-2.500M5 9.500l10-.8v6" fill="none" stroke="#aaa" stroke-width=".8"/><path d="M5 9.500v6.500" stroke="#aaa" stroke-width=".8"/><path d="M5.500 10l9-.8" stroke="#555" stroke-width="1.300"/><circle cx="5.3" cy="10" r="1.1" fill="#e60000"/><circle cx="14.7" cy="9.2" r="1.1" fill="#e60000"/></g></svg>
<svg class="b" style="left:1530px;top:59px;" width="8" height="5" viewBox="0 0 8 5"><polygon points="0,0 8,0 4,4.500" fill="#111"/></svg>
<svg class="b" style="left:1544px;top:51px;" width="20" height="20" viewBox="0 0 20 20"><g transform="translate(10 10) scale(1.1) translate(-9 -9)"><path d="M1 9v7M17 9v7" stroke="#999" stroke-width="1.100"/><path d="M1 12.500h16" stroke="#999" stroke-width="1"/><polygon points="1,12.500 4,11 4,14" fill="#999"/><polygon points="17,12.500 14,11 14,14" fill="#999"/><text x="9" y="9" font-size="9" font-weight="bold" fill="#222" text-anchor="middle" font-family="Liberation Sans, sans-serif">10</text></g></svg>
<svg class="b" style="left:1568px;top:59px;" width="8" height="5" viewBox="0 0 8 5"><polygon points="0,0 8,0 4,4.500" fill="#111"/></svg>
<svg class="b" style="left:3px;top:80px;" width="2" height="20" viewBox="0 0 2 20"><rect x="0" y="1" width="2" height="1" fill="#b4b4b4"/><rect x="0" y="4" width="2" height="1" fill="#b4b4b4"/><rect x="0" y="7" width="2" height="1" fill="#b4b4b4"/><rect x="0" y="10" width="2" height="1" fill="#b4b4b4"/><rect x="0" y="13" width="2" height="1" fill="#b4b4b4"/><rect x="0" y="16" width="2" height="1" fill="#b4b4b4"/></svg>
<svg class="b" style="left:9.5px;top:78.6px;" width="20" height="20" viewBox="0 0 20 20"><g transform="translate(10 10) scale(1.1) translate(-9 -9)"><polygon points="5.50,1.10 6.21,3.79 8.61,2.39 7.21,4.79 9.90,5.50 7.21,6.21 8.61,8.61 6.21,7.21 5.50,9.90 4.79,7.21 2.39,8.61 3.79,6.21 1.10,5.50 3.79,4.79 2.39,2.39 4.79,3.79" fill="#fff200" stroke="#d4b400" stroke-width=".5"/><circle cx="8.7" cy="8.7" r="1.6" fill="#e60000"/></g></svg>
<svg class="b" style="left:35.5px;top:86.6px;" width="8" height="5" viewBox="0 0 8 5"><polygon points="0,0 8,0 4,4.500" fill="#111"/></svg>
<svg class="b" style="left:49px;top:78.6px;" width="20" height="20" viewBox="0 0 20 20"><g transform="translate(10 10) scale(1.1) translate(-9 -9)"><line x1="2" y1="16" x2="15" y2="2" stroke="#5c86c8" stroke-width="3"/><line x1="2" y1="16" x2="15" y2="2" stroke="#c6dcf6" stroke-width="1.6"/><circle cx="2" cy="16" r="1.5" fill="#e60000"/><circle cx="15" cy="2" r="1.5" fill="#e60000"/><path d="M11.5 11.5h5M11.5 16.5h5M14 11.5v5" stroke="#6a8fc8" stroke-width="1.3" fill="none"/><polygon points="4.50,0.30 5.18,2.87 7.47,1.53 6.13,3.82 8.70,4.50 6.13,5.18 7.47,7.47 5.18,6.13 4.50,8.70 3.82,6.13 1.53,7.47 2.87,5.18 0.30,4.50 2.87,3.82 1.53,1.53 3.82,2.87" fill="#fff200" stroke="#d4b400" stroke-width=".5"/></g></svg>
<svg class="b" style="left:75px;top:78.6px;" width="20" height="20" viewBox="0 0 20 20"><g transform="translate(10 10) scale(1.1) translate(-9 -9)"><line x1="2" y1="16" x2="15" y2="2" stroke="#5c86c8" stroke-width="3"/><line x1="2" y1="16" x2="15" y2="2" stroke="#c6dcf6" stroke-width="1.6"/><circle cx="2" cy="16" r="1.5" fill="#e60000"/><circle cx="15" cy="2" r="1.5" fill="#e60000"/><path d="M11.5 11.5h5M11.5 16.5h5M14 11.5v5" stroke="#333" stroke-width="1.3" fill="none"/><polygon points="4.50,0.30 5.18,2.87 7.47,1.53 6.13,3.82 8.70,4.50 6.13,5.18 7.47,7.47 5.18,6.13 4.50,8.70 3.82,6.13 1.53,7.47 2.87,5.18 0.30,4.50 2.87,3.82 1.53,1.53 3.82,2.87" fill="#fff200" stroke="#d4b400" stroke-width=".5"/></g></svg>
<svg class="b" style="left:101px;top:78.6px;" width="20" height="20" viewBox="0 0 20 20"><g transform="translate(10 10) scale(1.1) translate(-9 -9)"><path d="M3 3h14" stroke="#777" stroke-width="1.100" stroke-dasharray="2.200 1"/><path d="M3 6.25h14" stroke="#777" stroke-width="1.100" stroke-dasharray="2.200 1"/><path d="M3 9.5h14" stroke="#777" stroke-width="1.100" stroke-dasharray="2.200 1"/><path d="M3 12.75h14" stroke="#777" stroke-width="1.100" stroke-dasharray="2.200 1"/><path d="M3 16h14" stroke="#777" stroke-width="1.100" stroke-dasharray="2.200 1"/><path d="M9 2v10" stroke="#7aa6e0" stroke-width="2.400"/><circle cx="9" cy="2" r="1.5" fill="#e60000"/><circle cx="9" cy="12" r="1.5" fill="#e60000"/><polygon points="4.50,0.50 5.14,2.95 7.33,1.67 6.05,3.86 8.50,4.50 6.05,5.14 7.33,7.33 5.14,6.05 4.50,8.50 3.86,6.05 1.67,7.33 2.95,5.14 0.50,4.50 2.95,3.86 1.67,1.67 3.86,2.95" fill="#fff200" stroke="#d4b400" stroke-width=".5"/></g></svg>
<svg class="b" style="left:127px;top:78.6px;" width="20" height="20" viewBox="0 0 20 20"><g transform="translate(10 10) scale(1.1) translate(-9 -9)"><path d="M3 3h14" stroke="#777" stroke-width="1.100" stroke-dasharray="2.200 1"/><path d="M3 6.25h14" stroke="#777" stroke-width="1.100" stroke-dasharray="2.200 1"/><path d="M3 9.5h14" stroke="#777" stroke-width="1.100" stroke-dasharray="2.200 1"/><path d="M3 12.75h14" stroke="#777" stroke-width="1.100" stroke-dasharray="2.200 1"/><path d="M3 16h14" stroke="#777" stroke-width="1.100" stroke-dasharray="2.200 1"/><path d="M4 14l9-9" stroke="#7aa6e0" stroke-width="2.200"/><circle cx="4" cy="14" r="1.5" fill="#e60000"/><circle cx="13" cy="5" r="1.5" fill="#e60000"/><polygon points="4.50,0.50 5.14,2.95 7.33,1.67 6.05,3.86 8.50,4.50 6.05,5.14 7.33,7.33 5.14,6.05 4.50,8.50 3.86,6.05 1.67,7.33 2.95,5.14 0.50,4.50 2.95,3.86 1.67,1.67 3.86,2.95" fill="#fff200" stroke="#d4b400" stroke-width=".5"/></g></svg>
<svg class="b" style="left:153px;top:78.6px;" width="20" height="20" viewBox="0 0 20 20"><g transform="translate(10 10) scale(1.1) translate(-9 -9)"><line x1="3" y1="15" x2="9" y2="15" stroke="#5c86c8" stroke-width="3"/><line x1="3" y1="15" x2="9" y2="15" stroke="#c6dcf6" stroke-width="1.6"/><line x1="9" y1="15" x2="15" y2="8.5" stroke="#5c86c8" stroke-width="3"/><line x1="9" y1="15" x2="15" y2="8.5" stroke="#c6dcf6" stroke-width="1.6"/><line x1="15" y1="8.5" x2="9" y2="2" stroke="#5c86c8" stroke-width="3"/><line x1="15" y1="8.5" x2="9" y2="2" stroke="#c6dcf6" stroke-width="1.6"/><circle cx="3" cy="15" r="1.5" fill="#e60000"/><circle cx="9" cy="15" r="1.5" fill="#e60000"/><circle cx="15" cy="8.5" r="1.5" fill="#e60000"/><circle cx="9" cy="2" r="1.5" fill="#e60000"/><path d="M11.5 12h5M11.5 17h5M14 12v5" stroke="#6a8fc8" stroke-width="1.3" fill="none"/><polygon points="4.50,0.30 5.18,2.87 7.47,1.53 6.13,3.82 8.70,4.50 6.13,5.18 7.47,7.47 5.18,6.13 4.50,8.70 3.82,6.13 1.53,7.47 2.87,5.18 0.30,4.50 2.87,3.82 1.53,1.53 3.82,2.87" fill="#fff200" stroke="#d4b400" stroke-width=".5"/></g></svg>
<svg class="b" style="left:179px;top:78.6px;" width="20" height="20" viewBox="0 0 20 20"><g transform="translate(10 10) scale(1.1) translate(-9 -9)"><line x1="3" y1="15" x2="9" y2="15" stroke="#5c86c8" stroke-width="3"/><line x1="3" y1="15" x2="9" y2="15" stroke="#c6dcf6" stroke-width="1.6"/><line x1="9" y1="15" x2="15" y2="8.5" stroke="#5c86c8" stroke-width="3"/><line x1="9" y1="15" x2="15" y2="8.5" stroke="#c6dcf6" stroke-width="1.6"/><line x1="15" y1="8.5" x2="9" y2="2" stroke="#5c86c8" stroke-width="3"/><line x1="15" y1="8.5" x2="9" y2="2" stroke="#c6dcf6" stroke-width="1.6"/><circle cx="3" cy="15" r="1.5" fill="#e60000"/><circle cx="9" cy="15" r="1.5" fill="#e60000"/><circle cx="15" cy="8.5" r="1.5" fill="#e60000"/><circle cx="9" cy="2" r="1.5" fill="#e60000"/><path d="M11.5 12h5M11.5 17h5M14 12v5" stroke="#333" stroke-width="1.3" fill="none"/><polygon points="4.50,0.30 5.18,2.87 7.47,1.53 6.13,3.82 8.70,4.50 6.13,5.18 7.47,7.47 5.18,6.13 4.50,8.70 3.82,6.13 1.53,7.47 2.87,5.18 0.30,4.50 2.87,3.82 1.53,1.53 3.82,2.87" fill="#fff200" stroke="#d4b400" stroke-width=".5"/></g></svg>
<svg class="b" style="left:205px;top:78.6px;" width="20" height="20" viewBox="0 0 20 20"><g transform="translate(10 10) scale(1.1) translate(-9 -9)"><line x1="2" y1="16" x2="15" y2="2" stroke="#5c86c8" stroke-width="3"/><line x1="2" y1="16" x2="15" y2="2" stroke="#c6dcf6" stroke-width="1.6"/><circle cx="2" cy="16" r="1.5" fill="#e60000"/><circle cx="15" cy="2" r="1.5" fill="#e60000"/><circle cx="8.5" cy="9" r="1.5" fill="#e60000"/><path d="M9 14l5-5" stroke="#888" stroke-width="1.200"/><path d="M11 15h6M14 12v6" stroke="#111" stroke-width="1.500"/><polygon points="4.50,0.30 5.18,2.87 7.47,1.53 6.13,3.82 8.70,4.50 6.13,5.18 7.47,7.47 5.18,6.13 4.50,8.70 3.82,6.13 1.53,7.47 2.87,5.18 0.30,4.50 2.87,3.82 1.53,1.53 3.82,2.87" fill="#fff200" stroke="#d4b400" stroke-width=".5"/></g></svg>
<div class="b" style="left:231px;top:80px;width:1px;height:19px;background:#d2d2d2;"></div>
<svg class="b" style="left:237px;top:78.6px;" width="20" height="20" viewBox="0 0 20 20"><g transform="translate(10 10) scale(1.1) translate(-9 -9)"><path d="M10 8l-5.500 8.500h11z" fill="#18a048"/><path d="M10 8l-2 8.500h4z" fill="#60d890" opacity=".6"/><circle cx="10" cy="7" r="2.700" fill="#0c7030"/><circle cx="9.2" cy="6.2" r="1" fill="#80e0a8"/><polygon points="5.00,0.30 5.68,2.87 7.97,1.53 6.63,3.82 9.20,4.50 6.63,5.18 7.97,7.47 5.68,6.13 5.00,8.70 4.32,6.13 2.03,7.47 3.37,5.18 0.80,4.50 3.37,3.82 2.03,1.53 4.32,2.87" fill="#fff200" stroke="#d4b400" stroke-width=".5"/><circle cx="9.5" cy="2" r="1.4" fill="#e60000"/></g></svg>
<div class="b" style="left:264px;top:80px;width:1px;height:19px;background:#d2d2d2;"></div>
<svg class="b" style="left:271px;top:78.6px;" width="20" height="20" viewBox="0 0 20 20"><g transform="translate(10 10) scale(1.1) translate(-9 -9)"><path d="M1.500 11v6M16.500 11v6" stroke="#111" stroke-width="1.500"/><path d="M1.500 14h15" stroke="#111" stroke-width="1.100"/><polygon points="1.500,14 5,12.300 5,15.700" fill="#111"/><polygon points="16.500,14 13,12.300 13,15.700" fill="#111"/><path d="M7.500 6.500l4 4.500M11.500 6.500l-4 4.500" stroke="#111" stroke-width="1.400"/><polygon points="5.00,0.30 5.68,2.87 7.97,1.53 6.63,3.82 9.20,4.50 6.63,5.18 7.97,7.47 5.68,6.13 5.00,8.70 4.32,6.13 2.03,7.47 3.37,5.18 0.80,4.50 3.37,3.82 2.03,1.53 4.32,2.87" fill="#fff200" stroke="#d4b400" stroke-width=".5"/></g></svg>
<svg class="b" style="left:296px;top:86.6px;" width="8" height="5" viewBox="0 0 8 5"><polygon points="0,0 8,0 4,4.500" fill="#111"/></svg>
<svg class="b" style="left:309px;top:78.6px;" width="20" height="20" viewBox="0 0 20 20"><g transform="translate(10 10) scale(1.1) translate(-9 -9)"><path d="M17 12.500h-11l-4 4" fill="none" stroke="#111" stroke-width="1.400"/><polygon points="1,17.500 1.500,13.500 5,17" fill="#111"/><path d="M7 6.500l3.500 4M10.500 6.500l-3.500 4M12.500 6.500l3.500 4M16 6.500l-3.500 4" stroke="#111" stroke-width="1.400"/><polygon points="5.00,0.30 5.68,2.87 7.97,1.53 6.63,3.82 9.20,4.50 6.63,5.18 7.97,7.47 5.68,6.13 5.00,8.70 4.32,6.13 2.03,7.47 3.37,5.18 0.80,4.50 3.37,3.82 2.03,1.53 4.32,2.87" fill="#fff200" stroke="#d4b400" stroke-width=".5"/></g></svg>
<div class="b" style="left:335px;top:80px;width:1px;height:19px;background:#d2d2d2;"></div>
<svg class="b" style="left:339px;top:78.6px;" width="20" height="20" viewBox="0 0 20 20"><g transform="translate(10 10) scale(1.1) translate(-9 -9)"><path d="M9.5 3V10.5" stroke="#6c9ad8" stroke-width="2.4"/><polygon points="6.3,9.5 12.7,9.5 9.5,13.5" fill="#6c9ad8"/><circle cx="9.5" cy="15.5" r="1.5" fill="#e60000"/><polygon points="5.50,0.80 6.18,3.37 8.47,2.03 7.13,4.32 9.70,5.00 7.13,5.68 8.47,7.97 6.18,6.63 5.50,9.20 4.82,6.63 2.53,7.97 3.87,5.68 1.30,5.00 3.87,4.32 2.53,2.03 4.82,3.37" fill="#fff200" stroke="#d4b400" stroke-width=".5"/></g></svg>
<svg class="b" style="left:367.5px;top:78.6px;" width="20" height="20" viewBox="0 0 20 20"><g transform="translate(10 10) scale(1.1) translate(-9 -9)"><rect x="2.500" y="14" width="14" height="2.600" fill="#b8d0f0" stroke="#6a8fc8" stroke-width=".6"/><path d="M3.500 5.500h12" stroke="#4a78c8" stroke-width="1.200"/><path d="M3.5 5.5V10.5" stroke="#6c9ad8" stroke-width="1.6"/><polygon points="1.3,9.5 5.7,9.5 3.5,13.5" fill="#6c9ad8"/><path d="M9.5 5.5V10.5" stroke="#6c9ad8" stroke-width="1.6"/><polygon points="7.3,9.5 11.7,9.5 9.5,13.5" fill="#6c9ad8"/><path d="M15.5 5.5V10.5" stroke="#6c9ad8" stroke-width="1.6"/><polygon points="13.3,9.5 17.7,9.5 15.5,13.5" fill="#6c9ad8"/><circle cx="2.5" cy="15.5" r="1.4" fill="#e60000"/><circle cx="16.5" cy="15.5" r="1.4" fill="#e60000"/><polygon points="6.50,0.80 7.18,3.37 9.47,2.03 8.13,4.32 10.70,5.00 8.13,5.68 9.47,7.97 7.18,6.63 6.50,9.20 5.82,6.63 3.53,7.97 4.87,5.68 2.30,5.00 4.87,4.32 3.53,2.03 5.82,3.37" fill="#fff200" stroke="#d4b400" stroke-width=".5"/></g></svg>
<svg class="b" style="left:393.5px;top:78.6px;" width="20" height="20" viewBox="0 0 20 20"><g transform="translate(10 10) scale(1.1) translate(-9 -9)"><rect x="1.500" y="14" width="15" height="2.600" fill="#ccc" stroke="#aaa" stroke-width=".6"/><path d="M2.500 5.500h13" stroke="#b0b0b0" stroke-width="1.200"/><path d="M3 5.5V10.5" stroke="#b4b4b4" stroke-width="1.6"/><polygon points="0.8,9.5 5.2,9.5 3,13.5" fill="#b4b4b4"/><path d="M9 5.5V10.5" stroke="#b4b4b4" stroke-width="1.6"/><polygon points="6.8,9.5 11.2,9.5 9,13.5" fill="#b4b4b4"/><path d="M15 5.5V10.5" stroke="#b4b4b4" stroke-width="1.6"/><polygon points="12.8,9.5 17.2,9.5 15,13.5" fill="#b4b4b4"/><circle cx="2" cy="15.5" r="1.4" fill="#aaa"/><circle cx="9" cy="15.5" r="1.4" fill="#aaa"/><circle cx="16" cy="15.5" r="1.4" fill="#aaa"/><path d="M5 1l1.500 3 3-1-2 2.500 2 2-3-.5-1.500 3-1-3-3 .5 2.500-2-2-2.500 3 1z" fill="#c8c8c8"/></g></svg>
<svg class="b" style="left:420px;top:78.6px;" width="20" height="20" viewBox="0 0 20 20"><g transform="translate(10 10) scale(1.1) translate(-9 -9)"><path d="M6.5 4.5l-5.500 8.500h11z" fill="#18a048"/><path d="M6.5 4.5l-2 8.500h4z" fill="#60d890" opacity=".6"/><circle cx="6.5" cy="3.5" r="2.700" fill="#0c7030"/><circle cx="5.7" cy="2.7" r="1" fill="#80e0a8"/><path d="M7 12.500l9 4" stroke="#e60000" stroke-width="1.400" stroke-dasharray="2.500 1.200"/><polygon points="10.500,11.500 13.500,15.500 9.500,15.200" fill="#e60000"/><circle cx="16.5" cy="16.5" r="1.4" fill="#e60000"/><polygon points="3.00,0.90 3.42,2.49 4.84,1.66 4.01,3.08 5.60,3.50 4.01,3.92 4.84,5.34 3.42,4.51 3.00,6.10 2.58,4.51 1.16,5.34 1.99,3.92 0.40,3.50 1.99,3.08 1.16,1.66 2.58,2.49" fill="#fff200" stroke="#d4b400" stroke-width=".5"/></g></svg>
<svg class="b" style="left:446px;top:78.6px;" width="20" height="20" viewBox="0 0 20 20"><g transform="translate(10 10) scale(1.1) translate(-9 -9)"><path d="M3 3c0 7 3 11 8 13" fill="none" stroke="#10a040" stroke-width="1.600"/><path d="M9 2v14" stroke="#111" stroke-width="1.400" stroke-dasharray="2.400 1.200"/><path d="M4.500 4c1 5 3 8 6 10" fill="none" stroke="#111" stroke-width="1"/><path d="M11.5 12h5M11.5 17h5M14 12v5" stroke="#333" stroke-width="1.3" fill="none"/><polygon points="4.50,0.70 5.11,3.03 7.19,1.81 5.97,3.89 8.30,4.50 5.97,5.11 7.19,7.19 5.11,5.97 4.50,8.30 3.89,5.97 1.81,7.19 3.03,5.11 0.70,4.50 3.03,3.89 1.81,1.81 3.89,3.03" fill="#fff200" stroke="#d4b400" stroke-width=".5"/></g></svg>
<svg class="b" style="left:470.5px;top:86.6px;" width="8" height="5" viewBox="0 0 8 5"><polygon points="0,0 8,0 4,4.500" fill="#111"/></svg>
<div class="b" style="left:482px;top:76px;width:1px;height:28px;background:#dcdcdc;"></div>
<svg class="b" style="left:487.5px;top:80px;" width="2" height="20" viewBox="0 0 2 20"><rect x="0" y="1" width="2" height="1" fill="#b4b4b4"/><rect x="0" y="4" width="2" height="1" fill="#b4b4b4"/><rect x="0" y="7" width="2" height="1" fill="#b4b4b4"/><rect x="0" y="10" width="2" height="1" fill="#b4b4b4"/><rect x="0" y="13" width="2" height="1" fill="#b4b4b4"/><rect x="0" y="16" width="2" height="1" fill="#b4b4b4"/></svg>
<svg class="b" style="left:495px;top:78.6px;" width="20" height="20" viewBox="0 0 20 20"><g transform="translate(10 10) scale(1.1) translate(-9 -9)"><path d="M0.500 5h13l-5 6v5.500l-3 1.500v-7z" fill="#6a9ae0"/><rect x="8.5" y="0.5" width="9" height="6.5" fill="#f4f4f4" stroke="#777" stroke-width=".8"/><rect x="8.5" y="0.5" width="9" height="2" fill="#2f4fb0"/></g></svg>
<div class="b" style="left:521px;top:80px;width:1px;height:19px;background:#d2d2d2;"></div>
<div class="b" style="left:526px;top:77px;width:25px;height:23px;background:#cce4f7;border:1px solid #99ccf3;box-sizing:border-box;"></div>
<svg class="b" style="left:528.5px;top:78.6px;" width="20" height="20" viewBox="0 0 20 20"><g transform="translate(10 10) scale(1.1) translate(-9 -9)"><ellipse cx="9.200" cy="10.300" rx="7.600" ry="6" fill="none" stroke="#666" stroke-width=".7"/><path d="M4.500 7.300q4.700 1.800 9.500 0" fill="none" stroke="#999" stroke-width=".6"/><path d="M4.500 14.500v-8.500h9.500v8.500" fill="none" stroke="#111" stroke-width="1.500"/><circle cx="4.5" cy="6" r="1.3" fill="#d01828"/><circle cx="14" cy="6" r="1.3" fill="#d01828"/><circle cx="4.5" cy="14.5" r="1.3" fill="#d01828"/><circle cx="14" cy="14.5" r="1.3" fill="#d01828"/></g></svg>
<svg class="b" style="left:554px;top:78.6px;" width="20" height="20" viewBox="0 0 20 20"><g transform="translate(10 10) scale(1.1) translate(-9 -9)"><path d="M2 9h14" stroke="#111" stroke-width="1"/><path d="M2 9l1-6 1.600 6zM16 9l-1-6-1.600 6z" fill="#ff6060" stroke="#e00000" stroke-width="1"/><path d="M3.600 9c1.500 9 9.300 9 10.800 0z" fill="#b8b8ff" stroke="#2020e0" stroke-width="1.100"/></g></svg>
<svg class="b" style="left:580.5px;top:78.6px;" width="20" height="20" viewBox="0 0 20 20"><g transform="translate(10 10) scale(1.1) translate(-9 -9)"><path d="M5.500 6l-3.500 5h7z" fill="#b8b8b8"/><circle cx="5.500" cy="5" r="2" fill="#a8a8a8"/><path d="M5.500 17v-3.500" stroke="#b0b0b0" stroke-width="2"/><polygon points="2.800,14.500 8.200,14.500 5.500,11.500" fill="#b0b0b0"/><path d="M16.500 4h-4" stroke="#b8b8b8" stroke-width="2"/><polygon points="13,1.500 13,6.500 9.800,4" fill="#b8b8b8"/></g></svg>
<div class="b" style="left:606px;top:80px;width:1px;height:19px;background:#d2d2d2;"></div>
<svg class="b" style="left:613px;top:78.6px;" width="20" height="20" viewBox="0 0 20 20"><g transform="translate(10 10) scale(1.1) translate(-9 -9)"><rect x="1.500" y="3" width="15" height="3" rx="1.500" fill="#d4d4d4"/><circle cx="3" cy="4.5" r="1.5" fill="#999"/><circle cx="15" cy="4.5" r="1.5" fill="#999"/><path d="M1 13h16" stroke="#999" stroke-width="1"/><path d="M1.500 13c3 5 5 4 7.500 0s4.500-5 7.500 0" fill="none" stroke="#888" stroke-width="1.300"/></g></svg>
<svg class="b" style="left:639px;top:78.6px;" width="20" height="20" viewBox="0 0 20 20"><g transform="translate(10 10) scale(1.1) translate(-9 -9)"><rect x="1.500" y="3" width="15" height="3" rx="1.500" fill="#d4d4d4"/><circle cx="3" cy="4.5" r="1.5" fill="#999"/><circle cx="7" cy="4.5" r="1.5" fill="#999"/><circle cx="11" cy="4.5" r="1.5" fill="#999"/><circle cx="15" cy="4.5" r="1.5" fill="#999"/><path d="M1 13h16" stroke="#999" stroke-width="1"/><path d="M1.500 13c3 5 5 4 7.500 0s4.500-5 7.500 0" fill="none" stroke="#888" stroke-width="1.300"/></g></svg>
<div class="b" style="left:663px;top:76px;width:1px;height:28px;background:#dcdcdc;"></div>
<svg class="b" style="left:668.5px;top:80px;" width="2" height="20" viewBox="0 0 2 20"><rect x="0" y="1" width="2" height="1" fill="#b4b4b4"/><rect x="0" y="4" width="2" height="1" fill="#b4b4b4"/><rect x="0" y="7" width="2" height="1" fill="#b4b4b4"/><rect x="0" y="10" width="2" height="1" fill="#b4b4b4"/><rect x="0" y="13" width="2" height="1" fill="#b4b4b4"/><rect x="0" y="16" width="2" height="1" fill="#b4b4b4"/></svg>
<div class="b" style="left:674px;top:78px;width:200px;height:21px;background:#e8e8f3;"></div>
<div class="b" style="left:679px;top:83px;width:11px;height:11px;background:#c8ffff;"></div>
<span class="t" style="left:695.5px;top:81.0px;font-size:12px;line-height:16px;color:#000;letter-spacing:-0.657px;">1 - Global XYZ</span>
<svg class="b" style="left:860px;top:86px;" width="10" height="7" viewBox="0 0 10 7"><path d="M0.800 0.800l4.200 4.200 4.200-4.200" fill="none" stroke="#333" stroke-width="1.100"/></svg>
<svg class="b" style="left:877px;top:78.6px;" width="20" height="20" viewBox="0 0 20 20"><g transform="translate(10 10) scale(1.1) translate(-9 -9)"><rect x="8" y="0.5" width="9.5" height="7" fill="#f4f4f4" stroke="#777" stroke-width=".8"/><rect x="8" y="0.5" width="9.5" height="2" fill="#2f4fb0"/><path d="M9 4v8" stroke="#2040d0" stroke-width="1.300"/><path d="M9 12l-6 3.500" stroke="#10a040" stroke-width="1.600"/><polygon points="1,17 3,13.500 4.800,16.200" fill="#10a040"/><path d="M9 12l6.500 2" stroke="#d04010" stroke-width="1.600"/><polygon points="18,14.800 14.600,12.300 14,15.500" fill="#d04010"/><circle cx="9" cy="12" r="1.600" fill="#f8e000"/></g></svg>
<div class="b" style="left:903px;top:80px;width:1px;height:19px;background:#d2d2d2;"></div>
<svg class="b" style="left:910px;top:78.6px;" width="20" height="20" viewBox="0 0 20 20"><g transform="translate(10 10) scale(1.1) translate(-9 -9)"><path d="M1.5 5h15" stroke="#888" stroke-width="1.100" stroke-dasharray="2.200 1"/><path d="M1.5 8h15" stroke="#888" stroke-width="1.100" stroke-dasharray="2.200 1"/><path d="M1.5 11h15" stroke="#888" stroke-width="1.100" stroke-dasharray="2.200 1"/><path d="M1.5 14h15" stroke="#888" stroke-width="1.100" stroke-dasharray="2.200 1"/><path d="M1.5 17h15" stroke="#888" stroke-width="1.100" stroke-dasharray="2.200 1"/><path d="M1.500 5v12M5.200 5v12M9 5v12M12.700 5v12M16.500 5v12" stroke="#fff" stroke-width="1"/><path d="M2 5.500c2-3 6-4 9-2.500l3 1.500v3.500l-4 1c-3 .5-6-.5-8-3.500z" fill="#e0b896" stroke="#a07858" stroke-width=".7"/><path d="M13 2l4-1v6l-3 .5z" fill="#4a78c8"/></g></svg>
<svg class="b" style="left:936px;top:78.6px;" width="20" height="20" viewBox="0 0 20 20"><g transform="translate(10 10) scale(1.1) translate(-9 -9)"><path d="M1.5 2h15" stroke="#888" stroke-width="1.100" stroke-dasharray="2.200 1"/><path d="M1.5 5.5h15" stroke="#888" stroke-width="1.100" stroke-dasharray="2.200 1"/><path d="M1.5 9h15" stroke="#888" stroke-width="1.100" stroke-dasharray="2.200 1"/><path d="M1.5 12.5h15" stroke="#888" stroke-width="1.100" stroke-dasharray="2.200 1"/><path d="M1.5 16h15" stroke="#888" stroke-width="1.100" stroke-dasharray="2.200 1"/><path d="M1.500 2v14M5.200 2v14M9 2v14M12.700 2v14M16.500 2v14" stroke="#fff" stroke-width="1"/><path d="M1 9h16M9 1v16" stroke="#1010c0" stroke-width="1.500"/><circle cx="9" cy="9" r="2.600" fill="#fff" stroke="#1010c0" stroke-width="1.500"/></g></svg>
<div class="b" style="left:960px;top:77px;width:25px;height:23px;background:#cce4f7;border:1px solid #99ccf3;box-sizing:border-box;"></div>
<svg class="b" style="left:962.5px;top:78.6px;" width="20" height="20" viewBox="0 0 20 20"><g transform="translate(10 10) scale(1.1) translate(-9 -9)"><rect x="4" y="3" width="11" height="11" fill="#a8c8ec" stroke="#5a88c0" stroke-width=".7"/><polygon points="9,1 12,3.500 12,16 9,17.500" fill="#a8c8ec" stroke="#5a88c0" stroke-width=".6"/><polygon points="1,11 14,7 17.500,8.500 4.500,12.500" fill="#e83030" stroke="#5a88c0" stroke-width=".6"/></g></svg>
<svg class="b" style="left:988px;top:78.6px;" width="20" height="20" viewBox="0 0 20 20"><g transform="translate(10 10) scale(1.1) translate(-9 -9)"><rect x="4" y="3" width="11" height="11" fill="#a8c8ec" stroke="#5a88c0" stroke-width=".7"/><polygon points="1,11 14,7 17.500,8.500 4.500,12.500" fill="#a8c8ec" stroke="#5a88c0" stroke-width=".6"/><polygon points="7,4 12,1.500 12,14 7,17" fill="#e83030" stroke="#5a88c0" stroke-width=".6"/></g></svg>
<svg class="b" style="left:1014px;top:78.6px;" width="20" height="20" viewBox="0 0 20 20"><g transform="translate(10 10) scale(1.1) translate(-9 -9)"><polygon points="9,1 12,3.500 12,16 9,17.500" fill="#a8c8ec" stroke="#5a88c0" stroke-width=".6"/><rect x="4" y="3" width="11" height="11" fill="#e84040" stroke="#5a88c0" stroke-width=".7"/><polygon points="1,11 8,8.500 17.500,8.500 9,12" fill="#a8c8ec" stroke="#5a88c0" stroke-width=".6"/><polygon points="8,5 10,3 10,14 8,16" fill="#a8c8ec" stroke="#5a88c0" stroke-width=".5"/></g></svg>
<div class="b" style="left:1040px;top:80px;width:1px;height:19px;background:#d2d2d2;"></div>
<svg class="b" style="left:1047.5px;top:78.6px;" width="20" height="20" viewBox="0 0 20 20"><g transform="translate(10 10) scale(1.1) translate(-9 -9)"><circle cx="4" cy="4.500" r="2.200" fill="none" stroke="#aaa" stroke-width="1.100"/><path d="M7 3l6 6" stroke="#aaa" stroke-width="1.100"/><polygon points="14,10 13.500,6.500 10.500,9.500" fill="#aaa"/><circle cx="10.500" cy="12.500" r="2.200" fill="none" stroke="#aaa" stroke-width="1.100"/><circle cx="12.500" cy="14.500" r="2.200" fill="none" stroke="#aaa" stroke-width="1.100"/></g></svg>
<svg class="b" style="left:1072.5px;top:78.6px;" width="20" height="20" viewBox="0 0 20 20"><g transform="translate(10 10) scale(1.1) translate(-9 -9)"><path d="M9 0.500v17" stroke="#999" stroke-width="1" stroke-dasharray="3 1 1 1"/><path d="M4 12c-5-3-2-7 5-7s10 4 5 7" fill="none" stroke="#aaa" stroke-width="1.500"/><polygon points="2.500,9.500 2,14 6.500,13" fill="#aaa"/></g></svg>
<svg class="b" style="left:1099px;top:78.6px;" width="20" height="20" viewBox="0 0 20 20"><g transform="translate(10 10) scale(1.1) translate(-9 -9)"><path d="M9 0.500v17" stroke="#999" stroke-width="1" stroke-dasharray="3 1 1 1"/><path d="M7 2.500l-5.500 14h5.500zM11 2.500l5.500 14h-5.500z" fill="#ececec" stroke="#aaa" stroke-width="1.100"/></g></svg>
<svg class="b" style="left:1125px;top:78.6px;" width="20" height="20" viewBox="0 0 20 20"><g transform="translate(10 10) scale(1.1) translate(-9 -9)"><path d="M2 2l14 14M16 2l-14 14" stroke="#111" stroke-width="1.500"/><circle cx="2" cy="2" r="1.6" fill="#e60000"/><circle cx="16" cy="2" r="1.6" fill="#e60000"/><circle cx="2" cy="16" r="1.6" fill="#e60000"/><circle cx="16" cy="16" r="1.6" fill="#e60000"/><circle cx="9" cy="9" r="2.600" fill="#f04040" opacity=".85"/></g></svg>
<svg class="b" style="left:1151px;top:78.6px;" width="20" height="20" viewBox="0 0 20 20"><g transform="translate(10 10) scale(1.1) translate(-9 -9)"><path d="M1.500 4.500h2l1-2h4l1 2h2l1-2h2l1.500 2v12h-14.500z" fill="#f4f4f4" stroke="#555" stroke-width="1.200"/><circle cx="9" cy="10.500" r="3.300" fill="none" stroke="#555" stroke-width="1.500"/><path d="M9 5.500v2M9 13.500v2M4 10.500h2M12 10.500h2M5.500 7l1.400 1.400M11.100 12.600l1.400 1.400M12.500 7l-1.400 1.400M6.900 12.600l-1.400 1.400" stroke="#555" stroke-width="1.400"/><path d="M2.500 8h2M13.500 8h2M2.500 13h2M13.500 13h2" stroke="#999" stroke-width=".8" stroke-dasharray="1 1"/></g></svg>
<div class="b" style="left:1176px;top:76px;width:1px;height:28px;background:#dcdcdc;"></div>
<svg class="b" style="left:1181px;top:80px;" width="2" height="20" viewBox="0 0 2 20"><rect x="0" y="1" width="2" height="1" fill="#b4b4b4"/><rect x="0" y="4" width="2" height="1" fill="#b4b4b4"/><rect x="0" y="7" width="2" height="1" fill="#b4b4b4"/><rect x="0" y="10" width="2" height="1" fill="#b4b4b4"/><rect x="0" y="13" width="2" height="1" fill="#b4b4b4"/><rect x="0" y="16" width="2" height="1" fill="#b4b4b4"/></svg>
<svg class="b" style="left:1188.2px;top:79.1px;" width="20" height="20" viewBox="0 0 20 20"><g transform="translate(10 10) scale(0.93) translate(-9 -9)"><rect x="1" y="1.500" width="16" height="15.500" fill="#e8e8e8" stroke="#555" stroke-width="1.200"/><rect x="1.500" y="2" width="15" height="2.200" fill="#2f4fb0"/><path d="M2 6.500h14M2 9h14M2 11.500h14M2 14h14M6 4.500v12" stroke="#888" stroke-width=".8"/><polygon points="6,16 15.500,16 15.500,5.500" fill="#a0f0a0" stroke="#30a030" stroke-width="1"/><polygon points="10.500,14 13.500,14 13.500,10.500" fill="#e8e8e8" stroke="#30a030" stroke-width=".7"/></g></svg>
<svg class="b" style="left:1212.5px;top:86.6px;" width="8" height="5" viewBox="0 0 8 5"><polygon points="0,0 8,0 4,4.500" fill="#111"/></svg>
<svg class="b" style="left:1226.5px;top:78.6px;" width="20" height="20" viewBox="0 0 20 20"><g transform="translate(10 10) scale(0.98) translate(-9 -9)"><line x1="2" y1="16" x2="14.5" y2="2" stroke="#5c86c8" stroke-width="3"/><line x1="2" y1="16" x2="14.5" y2="2" stroke="#c6dcf6" stroke-width="1.6"/><circle cx="2" cy="16" r="1.5" fill="#e60000"/><circle cx="14.5" cy="2" r="1.5" fill="#e60000"/><path d="M11.5 11.5h5M11.5 16.5h5M14 11.5v5" stroke="#333" stroke-width="1.3" fill="none"/></g></svg>
<svg class="b" style="left:1250.5px;top:86.6px;" width="8" height="5" viewBox="0 0 8 5"><polygon points="0,0 8,0 4,4.500" fill="#111"/></svg>
<div class="b" style="left:0px;top:103px;width:271px;height:909px;background:#fff;"></div>
<div class="b" style="left:0px;top:103px;width:271px;height:21px;background:#d9e6f5;"></div>
<span class="t" style="left:5.0px;top:105.0px;font-size:13px;line-height:17px;color:#2c2c2c;font-weight:bold;letter-spacing:-0.656px;">Navigator - Results</span>
<svg class="b" style="left:233px;top:108px;" width="10" height="10" viewBox="0 0 10 10"><path d="M2.500 2.500v-2h7v5.500h-2" fill="none" stroke="#222" stroke-width="1.300"/><rect x="0.700" y="3.500" width="6.300" height="5.500" fill="none" stroke="#222" stroke-width="1.400"/></svg>
<svg class="b" style="left:254.5px;top:109px;" width="9" height="9" viewBox="0 0 9 9"><path d="M1 1l7 7M8 1l-7 7" stroke="#222" stroke-width="1.700"/></svg>
<div class="b" style="left:0px;top:124px;width:271px;height:1px;background:#f3f4f8;"></div>
<div class="b" style="left:0px;top:125px;width:271px;height:1.3px;background:#c0c2d6;"></div>
<div class="b" style="left:0px;top:125px;width:2px;height:887px;background:#bcbed2;"></div>
<div class="b" style="left:269.3px;top:125px;width:1.8px;height:887px;background:#bcbed2;"></div>
<div class="b" style="left:2px;top:126.3px;width:267.3px;height:33.2px;background:#f4f4f4;"></div>
<div class="b" style="left:4px;top:129.5px;width:231px;height:20px;background:#e5e5e5;"></div>
<svg class="b" style="left:9px;top:132px;" width="14" height="14" viewBox="0 0 14 14"><rect x="0.500" y="0.500" width="13" height="13" fill="#d6d6d6" stroke="#aaa" stroke-width="1"/><rect x="1" y="1" width="12" height="2.500" fill="#9a9a9a"/><path d="M2 6h10M2 8.500h10M2 11h10" stroke="#fff" stroke-width="1.200"/><path d="M2 7.200h5" stroke="#aaa" stroke-width="1"/></svg>
<span class="t" style="left:28.0px;top:132.0px;font-size:12px;line-height:16px;color:#8c8c8c;letter-spacing:-0.253px;">Modal Analysis</span>
<svg class="b" style="left:221px;top:137px;" width="10" height="7" viewBox="0 0 10 7"><path d="M0.800 0.800l4.200 4.200 4.200-4.200" fill="none" stroke="#c0c0c0" stroke-width="1.100"/></svg>
<div class="b" style="left:236px;top:129.5px;width:14.5px;height:20px;background:#d2d2d2;"></div>
<svg class="b" style="left:241px;top:136px;" width="5" height="8" viewBox="0 0 5 8"><polygon points="4.500,0 0,3.500 4.500,7" fill="#222"/></svg>
<div class="b" style="left:252px;top:129.5px;width:15px;height:20px;background:#d2d2d2;"></div>
<svg class="b" style="left:257.5px;top:136px;" width="5" height="8" viewBox="0 0 5 8"><polygon points="0,0 4.500,3.500 0,7" fill="#222"/></svg>
<div class="b" style="left:38px;top:160px;width:231.3px;height:17.8px;background:#cce4f7;"></div>
<div class="b" style="left:23px;top:162px;width:13px;height:13px;background:#cce4f7;border:1px solid #0063b1;box-sizing:border-box;"></div>
<svg class="b" style="left:39.9px;top:160px;" width="18" height="18" viewBox="0 0 18 18"><path d="M4.500 13.500c-4-2.500-4-6.500 0-9M13.500 13.500c4-2.500 4-6.500 0-9" fill="none" stroke="#999" stroke-width=".7"/><path d="M4.500 6q4.500 1.800 9 0" fill="none" stroke="#aaa" stroke-width=".6"/><path d="M4.500 13.500v-9h9v9" fill="none" stroke="#111" stroke-width="1.250"/><circle cx="4.5" cy="4.5" r="1.25" fill="#c81828"/><circle cx="13.5" cy="4.5" r="1.25" fill="#c81828"/><circle cx="4.5" cy="13.5" r="1.25" fill="#c81828"/><circle cx="13.5" cy="13.5" r="1.25" fill="#c81828"/></svg>
<span class="t" style="left:62.5px;top:162.0px;font-size:12px;line-height:16px;color:#000;letter-spacing:-0.317px;">No. | Natural Frequency f [Hz]</span>
<div class="b" style="left:62px;top:179px;width:174px;height:20.5px;background:#e8e8f3;"></div>
<div class="b" style="left:80px;top:181px;width:1px;height:16px;background:#fff;"></div>
<span class="t" style="left:67.5px;top:182.0px;font-size:12px;line-height:16px;color:#000;">1</span>
<span class="t" style="left:87.0px;top:182.0px;font-size:12px;line-height:16px;color:#000;letter-spacing:-0.605px;">2.536</span>
<svg class="b" style="left:222.5px;top:186.5px;" width="10" height="7" viewBox="0 0 10 7"><path d="M0.800 0.800l4.200 4.200 4.200-4.200" fill="none" stroke="#333" stroke-width="1.100"/></svg>
<div class="b" style="left:237px;top:179px;width:15px;height:20.5px;background:#d2d2d2;"></div>
<svg class="b" style="left:242px;top:186px;" width="5" height="8" viewBox="0 0 5 8"><polygon points="4.500,0 0,3.500 4.500,7" fill="#555"/></svg>
<div class="b" style="left:253px;top:179px;width:15px;height:20.5px;background:#d2d2d2;"></div>
<svg class="b" style="left:258.5px;top:186px;" width="5" height="8" viewBox="0 0 5 8"><polygon points="0,0 4.500,3.500 0,7" fill="#555"/></svg>
<svg class="b" style="left:7px;top:207px;" width="10" height="7" viewBox="0 0 10 7"><path d="M0.800 1l4.200 4.500 4.200-4.500" fill="none" stroke="#333" stroke-width="1.300"/></svg>
<div class="b" style="left:23px;top:203px;width:13px;height:13px;background:#fff;border:1px solid #333;box-sizing:border-box;"></div>
<svg class="b" style="left:39.9px;top:201px;" width="18" height="18" viewBox="0 0 18 18"><path d="M4.500 13.500c-4-2.500-4-6.500 0-9M13.500 13.500c4-2.500 4-6.500 0-9" fill="none" stroke="#999" stroke-width=".7"/><path d="M4.500 6q4.500 1.800 9 0" fill="none" stroke="#aaa" stroke-width=".6"/><path d="M4.500 13.500v-9h9v9" fill="none" stroke="#111" stroke-width="1.250"/><circle cx="4.5" cy="4.5" r="1.25" fill="#c81828"/><circle cx="13.5" cy="4.5" r="1.25" fill="#c81828"/><circle cx="4.5" cy="13.5" r="1.25" fill="#c81828"/><circle cx="13.5" cy="13.5" r="1.25" fill="#c81828"/></svg>
<span class="t" style="left:62.5px;top:203.0px;font-size:12px;line-height:16px;color:#000;letter-spacing:-0.405px;">Mode Shape</span>
<svg class="b" style="left:42.5px;top:221px;" width="14" height="14" viewBox="0 0 14 14"><circle cx="7" cy="7" r="6" fill="#fff" stroke="#333" stroke-width="1"/><circle cx="7" cy="7" r="3.400" fill="#333"/></svg>
<svg class="b" style="left:60px;top:218.7px;" width="18" height="18" viewBox="0 0 18 18"><path d="M4.500 13.500c-4-2.500-4-6.500 0-9M13.500 13.500c4-2.500 4-6.500 0-9" fill="none" stroke="#999" stroke-width=".7"/><path d="M4.500 6q4.500 1.800 9 0" fill="none" stroke="#aaa" stroke-width=".6"/><path d="M4.500 13.500v-9h9v9" fill="none" stroke="#111" stroke-width="1.250"/><circle cx="4.5" cy="4.5" r="1.25" fill="#c81828"/><circle cx="13.5" cy="4.5" r="1.25" fill="#c81828"/><circle cx="4.5" cy="13.5" r="1.25" fill="#c81828"/><circle cx="13.5" cy="13.5" r="1.25" fill="#c81828"/></svg>
<span class="t" style="left:82.5px;top:221.0px;font-size:12px;line-height:16px;color:#000;letter-spacing:-0.303px;">|u|</span>
<svg class="b" style="left:42.5px;top:238.9px;" width="14" height="14" viewBox="0 0 14 14"><circle cx="7" cy="7" r="6" fill="#fff" stroke="#333" stroke-width="1"/></svg>
<svg class="b" style="left:60px;top:236.6px;" width="18" height="18" viewBox="0 0 18 18"><path d="M4.500 13.500c-4-2.500-4-6.500 0-9M13.500 13.500c4-2.500 4-6.500 0-9" fill="none" stroke="#999" stroke-width=".7"/><path d="M4.500 6q4.500 1.800 9 0" fill="none" stroke="#aaa" stroke-width=".6"/><path d="M4.500 13.500v-9h9v9" fill="none" stroke="#111" stroke-width="1.250"/><circle cx="4.5" cy="4.5" r="1.25" fill="#c81828"/><circle cx="13.5" cy="4.5" r="1.25" fill="#c81828"/><circle cx="4.5" cy="13.5" r="1.25" fill="#c81828"/><circle cx="13.5" cy="13.5" r="1.25" fill="#c81828"/></svg>
<span class="t" style="left:82.500px;top:238.9px;font-size:12px;line-height:16px;">u<span style="font-size:9.500px;position:relative;top:1px">X</span></span>
<svg class="b" style="left:42.5px;top:256.8px;" width="14" height="14" viewBox="0 0 14 14"><circle cx="7" cy="7" r="6" fill="#fff" stroke="#333" stroke-width="1"/></svg>
<svg class="b" style="left:60px;top:254.5px;" width="18" height="18" viewBox="0 0 18 18"><path d="M4.500 13.500c-4-2.500-4-6.500 0-9M13.500 13.500c4-2.500 4-6.500 0-9" fill="none" stroke="#999" stroke-width=".7"/><path d="M4.500 6q4.500 1.800 9 0" fill="none" stroke="#aaa" stroke-width=".6"/><path d="M4.500 13.500v-9h9v9" fill="none" stroke="#111" stroke-width="1.250"/><circle cx="4.5" cy="4.5" r="1.25" fill="#c81828"/><circle cx="13.5" cy="4.5" r="1.25" fill="#c81828"/><circle cx="4.5" cy="13.5" r="1.25" fill="#c81828"/><circle cx="13.5" cy="13.5" r="1.25" fill="#c81828"/></svg>
<span class="t" style="left:82.500px;top:256.8px;font-size:12px;line-height:16px;">u<span style="font-size:9.500px;position:relative;top:1px">Y</span></span>
<svg class="b" style="left:42.5px;top:274.7px;" width="14" height="14" viewBox="0 0 14 14"><circle cx="7" cy="7" r="6" fill="#fff" stroke="#333" stroke-width="1"/></svg>
<svg class="b" style="left:60px;top:272.4px;" width="18" height="18" viewBox="0 0 18 18"><path d="M4.500 13.500c-4-2.500-4-6.500 0-9M13.500 13.500c4-2.500 4-6.500 0-9" fill="none" stroke="#999" stroke-width=".7"/><path d="M4.500 6q4.500 1.800 9 0" fill="none" stroke="#aaa" stroke-width=".6"/><path d="M4.500 13.500v-9h9v9" fill="none" stroke="#111" stroke-width="1.250"/><circle cx="4.5" cy="4.5" r="1.25" fill="#c81828"/><circle cx="13.5" cy="4.5" r="1.25" fill="#c81828"/><circle cx="4.5" cy="13.5" r="1.25" fill="#c81828"/><circle cx="13.5" cy="13.5" r="1.25" fill="#c81828"/></svg>
<span class="t" style="left:82.500px;top:274.7px;font-size:12px;line-height:16px;">u<span style="font-size:9.500px;position:relative;top:1px">Z</span></span>
<svg class="b" style="left:42.5px;top:292.6px;" width="14" height="14" viewBox="0 0 14 14"><circle cx="7" cy="7" r="6" fill="#fff" stroke="#333" stroke-width="1"/></svg>
<svg class="b" style="left:60px;top:290.3px;" width="18" height="18" viewBox="0 0 18 18"><path d="M4.500 13.500c-4-2.500-4-6.500 0-9M13.500 13.500c4-2.500 4-6.500 0-9" fill="none" stroke="#999" stroke-width=".7"/><path d="M4.500 6q4.500 1.800 9 0" fill="none" stroke="#aaa" stroke-width=".6"/><path d="M4.500 13.500v-9h9v9" fill="none" stroke="#111" stroke-width="1.250"/><circle cx="4.5" cy="4.5" r="1.25" fill="#c81828"/><circle cx="13.5" cy="4.5" r="1.25" fill="#c81828"/><circle cx="4.5" cy="13.5" r="1.25" fill="#c81828"/><circle cx="13.5" cy="13.5" r="1.25" fill="#c81828"/></svg>
<span class="t" style="left:82.500px;top:292.6px;font-size:12px;line-height:16px;">φ<span style="font-size:9.500px;position:relative;top:1px">X</span></span>
<svg class="b" style="left:42.5px;top:310.5px;" width="14" height="14" viewBox="0 0 14 14"><circle cx="7" cy="7" r="6" fill="#fff" stroke="#333" stroke-width="1"/></svg>
<svg class="b" style="left:60px;top:308.2px;" width="18" height="18" viewBox="0 0 18 18"><path d="M4.500 13.500c-4-2.500-4-6.500 0-9M13.500 13.500c4-2.500 4-6.500 0-9" fill="none" stroke="#999" stroke-width=".7"/><path d="M4.500 6q4.500 1.800 9 0" fill="none" stroke="#aaa" stroke-width=".6"/><path d="M4.500 13.500v-9h9v9" fill="none" stroke="#111" stroke-width="1.250"/><circle cx="4.5" cy="4.5" r="1.25" fill="#c81828"/><circle cx="13.5" cy="4.5" r="1.25" fill="#c81828"/><circle cx="4.5" cy="13.5" r="1.25" fill="#c81828"/><circle cx="13.5" cy="13.5" r="1.25" fill="#c81828"/></svg>
<span class="t" style="left:82.500px;top:310.5px;font-size:12px;line-height:16px;">φ<span style="font-size:9.500px;position:relative;top:1px">Y</span></span>
<svg class="b" style="left:42.5px;top:328.4px;" width="14" height="14" viewBox="0 0 14 14"><circle cx="7" cy="7" r="6" fill="#fff" stroke="#333" stroke-width="1"/></svg>
<svg class="b" style="left:60px;top:326.1px;" width="18" height="18" viewBox="0 0 18 18"><path d="M4.500 13.500c-4-2.500-4-6.500 0-9M13.500 13.500c4-2.500 4-6.500 0-9" fill="none" stroke="#999" stroke-width=".7"/><path d="M4.500 6q4.500 1.800 9 0" fill="none" stroke="#aaa" stroke-width=".6"/><path d="M4.500 13.500v-9h9v9" fill="none" stroke="#111" stroke-width="1.250"/><circle cx="4.5" cy="4.5" r="1.25" fill="#c81828"/><circle cx="13.5" cy="4.5" r="1.25" fill="#c81828"/><circle cx="4.5" cy="13.5" r="1.25" fill="#c81828"/><circle cx="13.5" cy="13.5" r="1.25" fill="#c81828"/></svg>
<span class="t" style="left:82.500px;top:328.4px;font-size:12px;line-height:16px;">φ<span style="font-size:9.500px;position:relative;top:1px">Z</span></span>
<svg class="b" style="left:8.5px;top:350px;" width="7" height="10" viewBox="0 0 7 10"><path d="M1 0.800l4.500 4.200-4.500 4.200" fill="none" stroke="#9c9c9c" stroke-width="1.500"/></svg>
<div class="b" style="left:23px;top:347.5px;width:13px;height:13px;background:#fff;border:1px solid #333;box-sizing:border-box;"></div><svg class="b" style="left:23px;top:347.5px;" width="13" height="13" viewBox="0 0 13 13"><path d="M2.800 6.500l2.700 2.900 5-6" fill="none" stroke="#222" stroke-width="1.200"/></svg>
<span class="t" style="left:41.5px;top:347.0px;font-size:12px;line-height:16px;color:#000;letter-spacing:-0.890px;">Masses</span>
<div class="b" style="left:2px;top:707px;width:267.5px;height:5px;background:#f0f0f0;"></div>
<div class="b" style="left:38px;top:712.5px;width:231.5px;height:17px;background:#cce4f7;"></div>
<div class="b" style="left:23px;top:714px;width:13px;height:13px;background:#fff;border:1px solid #333;box-sizing:border-box;"></div><svg class="b" style="left:23px;top:714px;" width="13" height="13" viewBox="0 0 13 13"><path d="M2.800 6.500l2.700 2.900 5-6" fill="none" stroke="#222" stroke-width="1.200"/></svg>
<svg class="b" style="left:40.5px;top:712px;" width="17" height="17" viewBox="0 0 17 17"><polygon points="0,11.66 0,15.5 7.36,11.66" fill="#1c2ca0"/><polygon points="9.6,11.66 16,11.66 16,7.5" fill="#dc2408"/><path d="M0 11.66H16" stroke="#2a2a2a" stroke-width="1.100"/><text x="0.5" y="6.28" font-size="7.02" font-weight="bold" fill="#222" font-family="Liberation Sans, sans-serif" letter-spacing=".35">x.xx</text></svg>
<span class="t" style="left:62.5px;top:714.0px;font-size:12px;line-height:16px;color:#000;letter-spacing:-0.488px;">Result Values</span>
<div class="b" style="left:23px;top:732px;width:13px;height:13px;background:#fff;border:1px solid #333;box-sizing:border-box;"></div><svg class="b" style="left:23px;top:732px;" width="13" height="13" viewBox="0 0 13 13"><path d="M2.800 6.500l2.700 2.900 5-6" fill="none" stroke="#222" stroke-width="1.200"/></svg>
<svg class="b" style="left:40.5px;top:730px;" width="17" height="17" viewBox="0 0 17 17"><polygon points="0,11.66 0,15.5 7.36,11.66" fill="#1c2ca0"/><polygon points="9.6,11.66 16,11.66 16,7.5" fill="#dc2408"/><path d="M0 11.66H16" stroke="#2a2a2a" stroke-width="1.100"/><ellipse cx="11" cy="4.8" rx="4.6" ry="3" fill="#1c1c8c"/><ellipse cx="11" cy="4.8" rx="3" ry="1.8" fill="#fff"/><circle cx="11" cy="4.8" r="1.5" fill="#1c1c8c"/></svg>
<span class="t" style="left:62.5px;top:732.0px;font-size:12px;line-height:16px;color:#000;letter-spacing:-0.023px;">Title Information</span>
<div class="b" style="left:23px;top:750px;width:13px;height:13px;background:#fff;border:1px solid #333;box-sizing:border-box;"></div><svg class="b" style="left:23px;top:750px;" width="13" height="13" viewBox="0 0 13 13"><path d="M2.800 6.500l2.700 2.900 5-6" fill="none" stroke="#222" stroke-width="1.200"/></svg>
<svg class="b" style="left:40.5px;top:748px;" width="17" height="17" viewBox="0 0 17 17"><polygon points="0,11.66 0,15.5 7.36,11.66" fill="#1c2ca0"/><polygon points="9.6,11.66 16,11.66 16,7.5" fill="#dc2408"/><path d="M0 11.66H16" stroke="#2a2a2a" stroke-width="1.100"/><ellipse cx="11" cy="4.8" rx="4.6" ry="3" fill="#1c1c8c"/><ellipse cx="11" cy="4.8" rx="3" ry="1.8" fill="#fff"/><circle cx="11" cy="4.8" r="1.5" fill="#1c1c8c"/></svg>
<span class="t" style="left:62.5px;top:750.0px;font-size:12px;line-height:16px;color:#000;letter-spacing:-0.047px;">Max/Min Information</span>
<svg class="b" style="left:9px;top:771px;" width="7" height="10" viewBox="0 0 7 10"><path d="M1 0.800l4.500 4.200-4.500 4.200" fill="none" stroke="#9c9c9c" stroke-width="1.500"/></svg>
<div class="b" style="left:23px;top:768px;width:13px;height:13px;background:#cce4f7;border:1px solid #0063b1;box-sizing:border-box;"></div>
<svg class="b" style="left:40.5px;top:766px;" width="17" height="17" viewBox="0 0 17 17"><polygon points="0,11.66 0,15.5 7.36,11.66" fill="#1c2ca0"/><polygon points="9.6,11.66 16,11.66 16,7.5" fill="#dc2408"/><path d="M0 11.66H16" stroke="#2a2a2a" stroke-width="1.100"/><ellipse cx="11" cy="4.8" rx="4.6" ry="3" fill="#1c1c8c"/><ellipse cx="11" cy="4.8" rx="3" ry="1.8" fill="#fff"/><circle cx="11" cy="4.8" r="1.5" fill="#1c1c8c"/></svg>
<span class="t" style="left:62.5px;top:768.0px;font-size:12px;line-height:16px;color:#000;letter-spacing:-0.123px;">Deformation</span>
<svg class="b" style="left:9px;top:789px;" width="7" height="10" viewBox="0 0 7 10"><path d="M1 0.800l4.500 4.200-4.500 4.200" fill="none" stroke="#9c9c9c" stroke-width="1.500"/></svg>
<div class="b" style="left:23px;top:786px;width:13px;height:13px;background:#cce4f7;border:1px solid #0063b1;box-sizing:border-box;"></div>
<svg class="b" style="left:40.5px;top:784px;" width="17" height="17" viewBox="0 0 17 17"><polygon points="0,11.66 0,15.5 7.36,11.66" fill="#1c2ca0"/><polygon points="9.6,11.66 16,11.66 16,7.5" fill="#dc2408"/><path d="M0 11.66H16" stroke="#2a2a2a" stroke-width="1.100"/><ellipse cx="11" cy="4.8" rx="4.6" ry="3" fill="#1c1c8c"/><ellipse cx="11" cy="4.8" rx="3" ry="1.8" fill="#fff"/><circle cx="11" cy="4.8" r="1.5" fill="#1c1c8c"/></svg>
<span class="t" style="left:62.5px;top:786.0px;font-size:12px;line-height:16px;color:#000;letter-spacing:-0.558px;">Members</span>
<svg class="b" style="left:9px;top:807px;" width="7" height="10" viewBox="0 0 7 10"><path d="M1 0.800l4.500 4.200-4.500 4.200" fill="none" stroke="#9c9c9c" stroke-width="1.500"/></svg>
<div class="b" style="left:23px;top:804px;width:13px;height:13px;background:#cce4f7;border:1px solid #0063b1;box-sizing:border-box;"></div>
<svg class="b" style="left:41px;top:803.5px;overflow:hidden;" width="16" height="16" viewBox="0 0 16 16"><rect x="0" y="0" width="16" height="16" fill="#1030d0"/><circle cx="16" cy="16" r="19.5" fill="#10a0e0"/><circle cx="16" cy="16" r="16.6" fill="#20c060"/><circle cx="16" cy="16" r="13.7" fill="#a0e020"/><circle cx="16" cy="16" r="10.8" fill="#f0e020"/><circle cx="16" cy="16" r="7.9" fill="#f09020"/><circle cx="16" cy="16" r="5" fill="#e02020"/></svg>
<span class="t" style="left:62.5px;top:804.0px;font-size:12px;line-height:16px;color:#000;letter-spacing:-0.303px;">Type of display</span>
<svg class="b" style="left:9px;top:825px;" width="7" height="10" viewBox="0 0 7 10"><path d="M1 0.800l4.500 4.200-4.500 4.200" fill="none" stroke="#9c9c9c" stroke-width="1.500"/></svg>
<div class="b" style="left:23px;top:822px;width:13px;height:13px;background:#cce4f7;border:1px solid #0063b1;box-sizing:border-box;"></div>
<svg class="b" style="left:40.5px;top:820px;" width="17" height="17" viewBox="0 0 17 17"><polygon points="0,11.66 0,15.5 7.36,11.66" fill="#1c2ca0"/><polygon points="9.6,11.66 16,11.66 16,7.5" fill="#dc2408"/><path d="M0 11.66H16" stroke="#2a2a2a" stroke-width="1.100"/><ellipse cx="11" cy="4.8" rx="4.6" ry="3" fill="#1c1c8c"/><ellipse cx="11" cy="4.8" rx="3" ry="1.8" fill="#fff"/><circle cx="11" cy="4.8" r="1.5" fill="#1c1c8c"/></svg>
<span class="t" style="left:62.5px;top:822.0px;font-size:12px;line-height:16px;color:#000;letter-spacing:-0.221px;">Normalization of Mode Shapes</span>
<div class="b" style="left:2px;top:985px;width:267.5px;height:1px;background:#c8c8d4;"></div>
<div class="b" style="left:2px;top:986px;width:267.5px;height:25px;background:#f6f6f6;"></div>
<div class="b" style="left:2px;top:1008px;width:114px;height:3px;background:#fafafa;"></div>
<div class="b" style="left:2px;top:986px;width:37.5px;height:22.5px;background:#ededed;border:1px solid #cfcfd9;box-sizing:border-box;border-top:none;"></div>
<div class="b" style="left:40.5px;top:986px;width:37.5px;height:22.5px;background:#ededed;border:1px solid #cfcfd9;box-sizing:border-box;border-top:none;"></div>
<div class="b" style="left:78.5px;top:986px;width:37.5px;height:22.5px;background:#ededed;border:1px solid #cfcfd9;box-sizing:border-box;border-top:none;"></div>
<div class="b" style="left:115.5px;top:985px;width:39.5px;height:26px;background:#fff;border:1px solid #cfcfd9;box-sizing:border-box;border-top:none;border-bottom:none;"></div>
<div class="b" style="left:2px;top:1010.5px;width:267.5px;height:1.5px;background:#c4c8d8;"></div>
<svg class="b" style="left:12px;top:989px;" width="18" height="18" viewBox="0 0 18 18"><path d="M1 3h6l1.500 2h8v8h-15.500z" fill="#f0c040" stroke="#a88010" stroke-width=".9"/><rect x="5" y="5.500" width="10" height="7" fill="#f4f4f4" stroke="#777" stroke-width=".8"/><rect x="5" y="5.500" width="10" height="2" fill="#2f4fb0"/><path d="M6 10l5 5 5-3" fill="none" stroke="#4a90e0" stroke-width="1.600"/><path d="M11 15l1 2" stroke="#e02020" stroke-width="1.400"/></svg>
<svg class="b" style="left:50px;top:990px;" width="18" height="16" viewBox="0 0 18 16"><g transform="translate(9 8) scale(1.45) translate(-9 -8)"><ellipse cx="9" cy="8" rx="4.6" ry="3" fill="#1c1c8c"/><ellipse cx="9" cy="8" rx="3" ry="1.8" fill="#fff"/><circle cx="9" cy="8" r="1.5" fill="#1c1c8c"/></g></svg>
<svg class="b" style="left:88px;top:991px;" width="17" height="14" viewBox="0 0 17 14"><rect x="0.500" y="2" width="10.500" height="10" rx="1.500" fill="#555"/><polygon points="11,7 16,3 16,11" fill="#555"/></svg>
<svg class="b" style="left:126px;top:993px;" width="18" height="12" viewBox="0 0 18 12"><polygon points="0.5,5.16 0.5,9 7.86,5.16" fill="#1c2ca0"/><polygon points="10.1,5.16 16.5,5.16 16.5,1" fill="#dc2408"/><path d="M0.5 5.16H16.5" stroke="#2a2a2a" stroke-width="1.100"/></svg>
<div class="b" style="left:275px;top:103px;width:1114px;height:909.5px;background:#fff;"></div>
<span class="t" style="left:280.0px;top:107.5px;font-size:12px;line-height:16px;color:#000;letter-spacing:-0.381px;">LC10 - Subspace</span>
<svg class="b" style="left:272px;top:103px;" width="1120" height="909" viewBox="272 103 1120 909"><path d="M407.9 125.6V167M970.9 126.8V168.2" stroke="#a8a8a8" stroke-width="1"/><path d="M407.9 130.6L670 131.161M708 131.238L970.9 131.8" stroke="#a8a8a8" stroke-width="1"/><polygon points="408.4,130.6 417.9,127.6 417.9,133.6" fill="#a0a0a0"/><polygon points="970.4,131.8 960.9,128.8 960.9,134.8" fill="#a0a0a0"/><path d="M407.9 167L970.9 168.2" stroke="#4aa6e2" stroke-width="1.700"/><circle cx="407.9" cy="167" r="3.200" fill="#e9dde6"/><circle cx="407.9" cy="167" r="2.300" fill="#d9a6b6"/><circle cx="464.2" cy="167.12" r="4" fill="#c4d4e6"/><circle cx="463.4" cy="166.22" r="1.8" fill="#e4ecf6"/><circle cx="520.5" cy="167.24" r="4" fill="#c4d4e6"/><circle cx="519.7" cy="166.34" r="1.8" fill="#e4ecf6"/><circle cx="576.8" cy="167.36" r="4" fill="#c4d4e6"/><circle cx="576" cy="166.46" r="1.8" fill="#e4ecf6"/><circle cx="633.1" cy="167.48" r="4" fill="#c4d4e6"/><circle cx="632.3" cy="166.58" r="1.8" fill="#e4ecf6"/><circle cx="689.4" cy="167.6" r="4" fill="#c4d4e6"/><circle cx="688.6" cy="166.7" r="1.8" fill="#e4ecf6"/><circle cx="745.7" cy="167.72" r="4" fill="#c4d4e6"/><circle cx="744.9" cy="166.82" r="1.8" fill="#e4ecf6"/><circle cx="802" cy="167.84" r="4" fill="#c4d4e6"/><circle cx="801.2" cy="166.94" r="1.8" fill="#e4ecf6"/><circle cx="858.3" cy="167.96" r="4" fill="#c4d4e6"/><circle cx="857.5" cy="167.06" r="1.8" fill="#e4ecf6"/><circle cx="914.6" cy="168.08" r="4" fill="#c4d4e6"/><circle cx="913.8" cy="167.18" r="1.8" fill="#e4ecf6"/><circle cx="970.9" cy="168.2" r="3.200" fill="#e9dde6"/><circle cx="970.9" cy="168.2" r="2.300" fill="#d9a6b6"/><path d="M407.9 162.5V171.5" stroke="#30c030" stroke-width=".8" stroke-dasharray="1.500 1"/><path d="M407.9 198.6V224.3M689.6 199.2V224.9" stroke="#a8a8a8" stroke-width="1"/><path d="M407.9 203.6L532 203.866M567 203.937L689.6 204.2" stroke="#a8a8a8" stroke-width="1"/><polygon points="408.4,203.6 417.9,200.6 417.9,206.6" fill="#a0a0a0"/><polygon points="689.1,204.2 679.6,201.2 679.6,207.2" fill="#a0a0a0"/><path d="M407.9 224.3L689.6 224.9" stroke="#4aa6e2" stroke-width="1.700"/><circle cx="407.9" cy="224.3" r="3.200" fill="#e9dde6"/><circle cx="407.9" cy="224.3" r="2.300" fill="#d9a6b6"/><circle cx="464.24" cy="224.42" r="4" fill="#c4d4e6"/><circle cx="463.44" cy="223.52" r="1.8" fill="#e4ecf6"/><circle cx="520.58" cy="224.54" r="4" fill="#c4d4e6"/><circle cx="519.78" cy="223.64" r="1.8" fill="#e4ecf6"/><circle cx="576.92" cy="224.66" r="4" fill="#c4d4e6"/><circle cx="576.12" cy="223.76" r="1.8" fill="#e4ecf6"/><circle cx="633.26" cy="224.78" r="4" fill="#c4d4e6"/><circle cx="632.46" cy="223.88" r="1.8" fill="#e4ecf6"/><circle cx="689.6" cy="224.9" r="3.200" fill="#e9dde6"/><circle cx="689.6" cy="224.9" r="2.300" fill="#d9a6b6"/><path d="M407.9 254.4V281.6M548.5 254.6V281.9" stroke="#a8a8a8" stroke-width="1"/><path d="M407.9 259.4L463 259.48M493 259.52L548.5 259.6" stroke="#a8a8a8" stroke-width="1"/><polygon points="408.4,259.4 417.9,256.4 417.9,262.4" fill="#a0a0a0"/><polygon points="548,259.6 538.5,256.6 538.5,262.6" fill="#a0a0a0"/><path d="M407.9 281.6L548.5 281.9" stroke="#4aa6e2" stroke-width="1.700"/><circle cx="407.9" cy="281.6" r="3.200" fill="#e9dde6"/><circle cx="407.9" cy="281.6" r="2.300" fill="#d9a6b6"/><circle cx="454.767" cy="281.7" r="4" fill="#c4d4e6"/><circle cx="453.967" cy="280.8" r="1.8" fill="#e4ecf6"/><circle cx="501.633" cy="281.8" r="4" fill="#c4d4e6"/><circle cx="500.833" cy="280.9" r="1.8" fill="#e4ecf6"/><circle cx="548.5" cy="281.9" r="3.200" fill="#e9dde6"/><circle cx="548.5" cy="281.9" r="2.300" fill="#d9a6b6"/><path d="M407.9 277.1V286.1" stroke="#30c030" stroke-width=".8" stroke-dasharray="1.500 1"/><path d="M407.9 313.2V338.8M478.4 313.2V338.8" stroke="#a8a8a8" stroke-width="1"/><path d="M407.9 318.2L429 318.2M457 318.2L478.4 318.2" stroke="#a8a8a8" stroke-width="1"/><polygon points="408.4,318.2 417.9,315.2 417.9,321.2" fill="#a0a0a0"/><polygon points="477.9,318.2 468.4,315.2 468.4,321.2" fill="#a0a0a0"/><path d="M407.9 338.8L478.4 338.8" stroke="#4aa6e2" stroke-width="1.700"/><circle cx="407.9" cy="338.8" r="3.200" fill="#e9dde6"/><circle cx="407.9" cy="338.8" r="2.300" fill="#d9a6b6"/><circle cx="443.15" cy="338.8" r="4" fill="#c4d4e6"/><circle cx="442.35" cy="337.9" r="1.8" fill="#e4ecf6"/><circle cx="478.4" cy="338.8" r="3.200" fill="#e9dde6"/><circle cx="478.4" cy="338.8" r="2.300" fill="#d9a6b6"/><path d="M407.9 334.3V343.3" stroke="#30c030" stroke-width=".8" stroke-dasharray="1.500 1"/><path d="M478.4 334.3V343.3" stroke="#30c030" stroke-width=".8" stroke-dasharray="1.500 1"/><path d="M407.9 366.7V376.2M435.8 366.7V376.2" stroke="#a8a8a8" stroke-width="1"/><path d="M407.9 371.7L420.8 371.7M422.8 371.7L435.8 371.7" stroke="#a8a8a8" stroke-width="1"/><polygon points="408.4,371.7 417.9,368.7 417.9,374.7" fill="#a0a0a0"/><polygon points="435.3,371.7 425.8,368.7 425.8,374.7" fill="#a0a0a0"/><path d="M407.9 396L435.8 396" stroke="#4aa6e2" stroke-width="1.700"/><circle cx="407.9" cy="396" r="3.200" fill="#e9dde6"/><circle cx="407.9" cy="396" r="2.300" fill="#d9a6b6"/><circle cx="435.8" cy="396" r="3.200" fill="#e9dde6"/><circle cx="435.8" cy="396" r="2.300" fill="#d9a6b6"/><path d="M435.8 391.5V400.5" stroke="#30c030" stroke-width=".8" stroke-dasharray="1.500 1"/></svg>
<span class="t" style="left:671.5px;top:123.5px;font-size:12px;line-height:16px;color:#e9e9f1;letter-spacing:-0.283px;">20.000</span>
<span class="t" style="left:533.5px;top:196.0px;font-size:12px;line-height:16px;color:#e9e9f1;letter-spacing:-0.783px;">10.000</span>
<span class="t" style="left:464.5px;top:251.6px;font-size:12px;line-height:16px;color:#e9e9f1;letter-spacing:-0.605px;">5.000</span>
<span class="t" style="left:430.0px;top:310.3px;font-size:12px;line-height:16px;color:#e9e9f1;letter-spacing:-0.805px;">2.500</span>
<span class="t" style="left:409.0px;top:374.3px;font-size:12px;line-height:16px;color:#e9e9f1;letter-spacing:-0.805px;">1.000</span>
<span class="t" style="left:414.0px;top:149.0px;font-size:12px;line-height:16px;color:#c4f2ff;letter-spacing:-0.713px;">50.5</span>
<span class="t" style="left:471.4px;top:149.0px;font-size:12px;line-height:16px;color:#c4f2ff;letter-spacing:-0.705px;">101.0</span>
<span class="t" style="left:527.6px;top:149.1px;font-size:12px;line-height:16px;color:#c4f2ff;letter-spacing:-0.705px;">101.0</span>
<span class="t" style="left:583.9px;top:149.3px;font-size:12px;line-height:16px;color:#c4f2ff;letter-spacing:-0.705px;">101.0</span>
<span class="t" style="left:640.1px;top:149.4px;font-size:12px;line-height:16px;color:#c4f2ff;letter-spacing:-0.705px;">101.0</span>
<span class="t" style="left:696.4px;top:149.5px;font-size:12px;line-height:16px;color:#c4f2ff;letter-spacing:-0.705px;">101.0</span>
<span class="t" style="left:752.6px;top:149.7px;font-size:12px;line-height:16px;color:#c4f2ff;letter-spacing:-0.705px;">101.0</span>
<span class="t" style="left:808.9px;top:149.8px;font-size:12px;line-height:16px;color:#c4f2ff;letter-spacing:-0.705px;">101.0</span>
<span class="t" style="left:865.1px;top:149.9px;font-size:12px;line-height:16px;color:#c4f2ff;letter-spacing:-0.705px;">101.0</span>
<span class="t" style="left:921.4px;top:150.0px;font-size:12px;line-height:16px;color:#c4f2ff;letter-spacing:-0.705px;">101.0</span>
<span class="t" style="left:977.0px;top:150.5px;font-size:12px;line-height:16px;color:#c4f2ff;letter-spacing:-0.713px;">50.5</span>
<span class="t" style="left:413.0px;top:206.0px;font-size:12px;line-height:16px;color:#c4f2ff;letter-spacing:-0.713px;">50.5</span>
<span class="t" style="left:471.4px;top:206.2px;font-size:12px;line-height:16px;color:#c4f2ff;letter-spacing:-0.705px;">101.0</span>
<span class="t" style="left:527.6px;top:206.2px;font-size:12px;line-height:16px;color:#c4f2ff;letter-spacing:-0.705px;">101.0</span>
<span class="t" style="left:583.9px;top:206.2px;font-size:12px;line-height:16px;color:#c4f2ff;letter-spacing:-0.705px;">101.0</span>
<span class="t" style="left:640.1px;top:206.2px;font-size:12px;line-height:16px;color:#c4f2ff;letter-spacing:-0.705px;">101.0</span>
<span class="t" style="left:695.0px;top:207.0px;font-size:12px;line-height:16px;color:#c4f2ff;letter-spacing:-0.713px;">50.5</span>
<span class="t" style="left:413.5px;top:263.8px;font-size:12px;line-height:16px;color:#c4f2ff;letter-spacing:-0.713px;">42.1</span>
<span class="t" style="left:460.0px;top:263.8px;font-size:12px;line-height:16px;color:#c4f2ff;letter-spacing:-0.713px;">84.2</span>
<span class="t" style="left:507.0px;top:263.8px;font-size:12px;line-height:16px;color:#c4f2ff;letter-spacing:-0.713px;">84.2</span>
<span class="t" style="left:553.8px;top:263.8px;font-size:12px;line-height:16px;color:#c4f2ff;letter-spacing:-0.713px;">42.1</span>
<span class="t" style="left:412.0px;top:320.7px;font-size:12px;line-height:16px;color:#c4f2ff;letter-spacing:-0.713px;">31.6</span>
<span class="t" style="left:448.0px;top:320.7px;font-size:12px;line-height:16px;color:#c4f2ff;letter-spacing:-0.713px;">63.1</span>
<span class="t" style="left:483.0px;top:320.7px;font-size:12px;line-height:16px;color:#c4f2ff;letter-spacing:-0.713px;">31.6</span>
<span class="t" style="left:412.0px;top:379.5px;font-size:12px;line-height:16px;color:#c4f2ff;letter-spacing:-0.713px;">25.3</span>
<span class="t" style="left:440.4px;top:379.5px;font-size:12px;line-height:16px;color:#c4f2ff;letter-spacing:-0.713px;">25.3</span>
<div class="b" style="left:923px;top:182.9px;width:148.5px;height:21px;background:#fff;border:1px solid #f9f9f5;box-sizing:border-box;"></div><span class="t" style="left:927.0px;top:184.2px;font-size:16px;line-height:20px;color:#ff0a0a;letter-spacing:0.542px;font-family:'DejaVu Sans','Liberation Sans',sans-serif;">20 m / 10 = 2 m</span>
<div class="b" style="left:810.3px;top:228.3px;width:137.3px;height:21px;background:#fff;border:1px solid #f9f9f5;box-sizing:border-box;"></div><span class="t" style="left:814.3px;top:229.6px;font-size:16px;line-height:20px;color:#6cc42c;letter-spacing:0.507px;font-family:'DejaVu Sans','Liberation Sans',sans-serif;">10 m / 2 m = 5</span>
<div class="b" style="left:806.3px;top:292px;width:144px;height:21px;background:#fff;border:1px solid #f9f9f5;box-sizing:border-box;"></div><span class="t" style="left:810.3px;top:293.3px;font-size:16px;line-height:20px;color:#6cc42c;letter-spacing:0.581px;font-family:'DejaVu Sans','Liberation Sans',sans-serif;">5 m / 2 m = 2,5</span>
<div class="b" style="left:779.6px;top:367.8px;width:170.7px;height:21px;background:#fff;border:1px solid #f9f9f5;box-sizing:border-box;"></div><span class="t" style="left:783.6px;top:369.1px;font-size:16px;line-height:20px;color:#6cc42c;letter-spacing:0.554px;font-family:'DejaVu Sans','Liberation Sans',sans-serif;">2,5 m / 2 m = 1,25</span>
<div class="b" style="left:800.5px;top:431.5px;width:144px;height:21px;background:#fff;border:1px solid #f9f9f5;box-sizing:border-box;"></div><span class="t" style="left:804.5px;top:432.8px;font-size:16px;line-height:20px;color:#6cc42c;letter-spacing:0.581px;font-family:'DejaVu Sans','Liberation Sans',sans-serif;">1 m / 2 m = 0,5</span>
<div class="b" style="left:1059.8px;top:227px;width:56.2px;height:21px;background:#fff;border:1px solid #f9f9f5;box-sizing:border-box;"></div><span class="t" style="left:1063.8px;top:228.3px;font-size:16px;line-height:20px;color:#6cc42c;letter-spacing:0.295px;font-family:'DejaVu Sans','Liberation Sans',sans-serif;">N = 5</span>
<div class="b" style="left:1060.7px;top:290.7px;width:55.3px;height:21px;background:#fff;border:1px solid #f9f9f5;box-sizing:border-box;"></div><span class="t" style="left:1064.7px;top:292.0px;font-size:16px;line-height:20px;color:#6cc42c;letter-spacing:0.114px;font-family:'DejaVu Sans','Liberation Sans',sans-serif;">N = 3</span>
<div class="b" style="left:1059.8px;top:365.5px;width:56.2px;height:21px;background:#fff;border:1px solid #f9f9f5;box-sizing:border-box;"></div><span class="t" style="left:1063.8px;top:366.8px;font-size:16px;line-height:20px;color:#6cc42c;letter-spacing:0.295px;font-family:'DejaVu Sans','Liberation Sans',sans-serif;">N = 2</span>
<div class="b" style="left:1058.9px;top:431px;width:54.4px;height:21px;background:#fff;border:1px solid #f9f9f5;box-sizing:border-box;"></div><span class="t" style="left:1062.9px;top:432.3px;font-size:16px;line-height:20px;color:#6cc42c;letter-spacing:-0.066px;font-family:'DejaVu Sans','Liberation Sans',sans-serif;">N = 1</span>
<div class="b" style="left:976.5px;top:559.8px;width:28px;height:21px;background:#fff;border:1px solid #f9f9f5;box-sizing:border-box;"></div><span class="t" style="left:980.5px;top:561.1px;font-size:16px;line-height:20px;color:#ff0a0a;letter-spacing:-0.680px;font-family:'DejaVu Sans','Liberation Sans',sans-serif;">10</span>
<svg class="b" style="left:272px;top:103px;" width="1120" height="909" viewBox="272 103 1120 909"><g filter="url(#sh)"><path d="M974 238.5H1022" stroke="#5ba12d" stroke-width="8" stroke-linecap="round"/><polygon points="1019.500,226 1019.500,251 1045.500,238.5" fill="#5ba12d"/><path d="M974 302.5H1022" stroke="#5ba12d" stroke-width="8" stroke-linecap="round"/><polygon points="1019.500,290 1019.500,315 1045.500,302.5" fill="#5ba12d"/><path d="M974 377.5H1022" stroke="#5ba12d" stroke-width="8" stroke-linecap="round"/><polygon points="1019.500,365 1019.500,390 1045.500,377.5" fill="#5ba12d"/><path d="M974 441H1022" stroke="#5ba12d" stroke-width="8" stroke-linecap="round"/><polygon points="1019.500,428.5 1019.500,453.5 1045.500,441" fill="#5ba12d"/><path d="M1015.4 564.3C1026.4 554.7 1056.8 528.6 1081.3 506.6C1105.8 484.6 1136.7 457.4 1162.6 432.2C1188.5 407.0 1218.8 376.5 1236.5 355.5C1254.2 334.5 1260.7 322.6 1268.5 306.0C1276.3 289.4 1283.1 269.7 1283.6 256.0C1284.1 242.3 1280.4 232.8 1271.5 224.0C1262.6 215.2 1246.6 208.1 1230.0 203.0C1213.4 197.9 1191.8 195.3 1172.0 193.6C1152.2 191.9 1121.2 192.9 1111.0 192.8" fill="none" stroke="#ea4444" stroke-width="2.700" stroke-linecap="round"/><polygon points="1102.500,192.800 1112.500,187.800 1112.500,197.800" fill="#ea4444"/></g></svg>
<svg class="b" style="left:1280px;top:118px;" width="82" height="106" viewBox="1280 118 82 106"><rect x="1286" y="122.500" width="70" height="56.500" rx="2" fill="#dedede"/><rect x="1286" y="179" width="70" height="40.500" rx="2" fill="#c9c9c9"/><path d="M1303.500 122.500V219.500M1337.500 122.500V219.500" stroke="#111" stroke-width="1.700"/><path d="M1355.500 123V219" stroke="#111" stroke-width="1.500"/><path d="M1286.500 123V219" stroke="#555" stroke-width=".8"/><path d="M1286 137H1356M1286 164.500H1356M1286 179H1356M1286 189.300H1356M1286 209H1356" stroke="#111" stroke-width="1.700"/><path d="M1286 122.700H1356M1286 219.300H1356" stroke="#888" stroke-width=".6"/></svg>
<span class="t" style="left:1312.0px;top:144.9px;font-size:12.5px;line-height:16.5px;color:#8484f4;font-weight:bold;letter-spacing:0.130px;font-family:'DejaVu Sans','Liberation Sans',sans-serif;">+Z</span>
<span class="t" style="left:1312.6px;top:192.6px;font-size:10.5px;line-height:14.5px;color:#8be08b;font-weight:bold;letter-spacing:2.792px;font-family:'DejaVu Sans','Liberation Sans',sans-serif;">-Y</span>
<span class="t" style="left:1300.0px;top:994.5px;font-size:12px;line-height:16px;color:#000;letter-spacing:0.094px;">Dimensions [m]</span>
<div class="b" style="left:1393px;top:103px;width:205px;height:909px;background:#fff;"></div>
<div class="b" style="left:1393px;top:103px;width:205px;height:21px;background:#d9e6f5;"></div>
<span class="t" style="left:1399.0px;top:105.0px;font-size:13px;line-height:17px;color:#2c2c2c;font-weight:bold;letter-spacing:-0.808px;">Control Panel</span>
<svg class="b" style="left:1561.5px;top:108px;" width="10" height="10" viewBox="0 0 10 10"><path d="M2.500 2.500v-2h7v5.500h-2" fill="none" stroke="#222" stroke-width="1.300"/><rect x="0.700" y="3.500" width="6.300" height="5.500" fill="none" stroke="#222" stroke-width="1.400"/></svg>
<svg class="b" style="left:1582.5px;top:109px;" width="9" height="9" viewBox="0 0 9 9"><path d="M1 1l7 7M8 1l-7 7" stroke="#222" stroke-width="1.700"/></svg>
<div class="b" style="left:1393px;top:124px;width:205px;height:1px;background:#f3f4f8;"></div>
<div class="b" style="left:1393px;top:125px;width:205px;height:1.3px;background:#c6c7d8;"></div>
<div class="b" style="left:1393px;top:125px;width:1.3px;height:861px;background:#c6c7d8;"></div>
<span class="t" style="left:1404.0px;top:129.3px;font-size:12px;line-height:16px;color:#000;letter-spacing:-0.412px;">Display Factors</span>
<span class="t" style="left:1404.0px;top:142.5px;font-size:12px;line-height:16px;color:#000;letter-spacing:-0.502px;">Results</span>
<div class="b" style="left:1394.5px;top:166px;width:203.5px;height:16px;background:#e0e0e0;"></div>
<div class="b" style="left:1394.5px;top:182px;width:18.5px;height:786px;background:#e0e0e0;"></div>
<div class="b" style="left:1399px;top:170px;width:9px;height:9px;background:#fff;border:1px solid #8a8a8a;box-sizing:border-box;"></div>
<div class="b" style="left:1401px;top:174px;width:5px;height:1px;background:#444;"></div>
<div class="b" style="left:1409px;top:174.5px;width:5px;height:1px;border-top:1px dotted #aaa;"></div>
<span class="t" style="left:1417.5px;top:167.0px;font-size:12px;line-height:16px;color:#000;letter-spacing:-0.455px;">General</span>
<div class="b" style="left:1413px;top:182px;width:115.5px;height:16px;background:#f8f8f0;"></div>
<div class="b" style="left:1423px;top:190.5px;width:10px;height:1px;border-top:1px dotted #aaa;"></div>
<span class="t" style="left:1437.5px;top:183.0px;font-size:12px;line-height:16px;color:#000;letter-spacing:-0.459px;">Mode Shapes</span>
<span class="t" style="left:1555.5px;top:183.0px;font-size:12px;line-height:16px;color:#000;letter-spacing:-0.463px;">1.12</span>
<svg class="b" style="left:1587.5px;top:186px;" width="7" height="9" viewBox="0 0 7 9"><polygon points="0,4.500 6.500,0 6.500,9" fill="#f01818"/></svg>
<div class="b" style="left:1413px;top:198px;width:115.5px;height:16px;background:#f8f8f0;"></div>
<div class="b" style="left:1423px;top:206.5px;width:10px;height:1px;border-top:1px dotted #aaa;"></div>
<span class="t" style="left:1437.5px;top:199.0px;font-size:12px;line-height:16px;color:#000;letter-spacing:-0.890px;">Masses</span>
<span class="t" style="left:1555.5px;top:199.0px;font-size:12px;line-height:16px;color:#000;letter-spacing:-0.463px;">1.00</span>
<svg class="b" style="left:1587.5px;top:202px;" width="7" height="9" viewBox="0 0 7 9"><polygon points="0,4.500 6.500,0 6.500,9" fill="#f01818"/></svg>
<div class="b" style="left:1422.5px;top:182px;width:1px;height:25px;border-left:1px dotted #aaa;"></div>
<div class="b" style="left:1528.5px;top:182px;width:1px;height:32px;background:#e4e4e4;"></div>
<div class="b" style="left:1580.5px;top:182px;width:1px;height:32px;background:#e4e4e4;"></div>
<div class="b" style="left:1394.5px;top:970px;width:203.5px;height:16px;background:#f0f0f0;"></div>
<div class="b" style="left:1411.5px;top:970.5px;width:112.5px;height:14.5px;background:#cdcdcd;"></div>
<svg class="b" style="left:1399px;top:973.5px;" width="6" height="9" viewBox="0 0 6 9"><path d="M5 0.800l-4 3.700 4 3.700" fill="none" stroke="#444" stroke-width="1.800"/></svg>
<svg class="b" style="left:1586.5px;top:973.5px;" width="6" height="9" viewBox="0 0 6 9"><path d="M1 0.800l4 3.700-4 3.700" fill="none" stroke="#444" stroke-width="1.800"/></svg>
<div class="b" style="left:1394.5px;top:986px;width:203.5px;height:1px;background:#cdcdda;"></div>
<div class="b" style="left:1394.5px;top:987px;width:203.5px;height:25px;background:#f6f6f6;"></div>
<div class="b" style="left:1393px;top:986px;width:39.5px;height:25.5px;background:#fff;border:1px solid #cdcdda;box-sizing:border-box;border-top:none;"></div>
<svg class="b" style="left:1404px;top:992px;" width="17" height="14" viewBox="0 0 17 14"><path d="M8.500 0.500v3M2 4h13M4.200 4l-3 6.500h6zM12.800 4l-3 6.500h6z" fill="none" stroke="#555" stroke-width="1.100"/><path d="M1 10.800a3.200 2.200 0 0 0 6.400 0zM9.600 10.800a3.200 2.200 0 0 0 6.400 0z" fill="#777"/></svg>
<div class="b" style="left:0px;top:1012.5px;width:1598px;height:20.5px;background:#f6f6f6;"></div>
<div class="b" style="left:776px;top:1015px;width:1px;height:18px;background:#d4d4d4;"></div>
<div class="b" style="left:849px;top:1015px;width:1px;height:18px;background:#d4d4d4;"></div>
<div class="b" style="left:888px;top:1015px;width:1px;height:18px;background:#d4d4d4;"></div>
<div class="b" style="left:935px;top:1015px;width:1px;height:18px;background:#d4d4d4;"></div>
<div class="b" style="left:1024px;top:1015px;width:1px;height:18px;background:#d4d4d4;"></div>
<div class="b" style="left:1129px;top:1015px;width:1px;height:18px;background:#d4d4d4;"></div>
<div class="b" style="left:1285px;top:1015px;width:1px;height:18px;background:#d4d4d4;"></div>
<div class="b" style="left:1352px;top:1015px;width:1px;height:18px;background:#d4d4d4;"></div>
<div class="b" style="left:1428px;top:1015px;width:1px;height:18px;background:#d4d4d4;"></div>
<div class="b" style="left:1504px;top:1015px;width:1px;height:18px;background:#d4d4d4;"></div>
<div class="b" style="left:1580px;top:1015px;width:1px;height:18px;background:#d4d4d4;"></div>
<div class="b" style="left:777px;top:1016px;width:33px;height:17px;background:#eeeeee;"></div>
<div class="b" style="left:850px;top:1016px;width:37px;height:17px;background:#eeeeee;"></div>
<div class="b" style="left:890px;top:1016px;width:44px;height:17px;background:#eeeeee;"></div>
<span class="t" style="left:780.0px;top:1016.5px;font-size:12px;line-height:16px;color:#000;letter-spacing:-1.420px;">SNAP</span>
<span class="t" style="left:816.5px;top:1016.5px;font-size:12px;line-height:16px;color:#000;letter-spacing:-0.875px;">GRID</span>
<span class="t" style="left:853.0px;top:1016.5px;font-size:12px;line-height:16px;color:#000;letter-spacing:-1.135px;">LGRID</span>
<span class="t" style="left:894.5px;top:1016.5px;font-size:12px;line-height:16px;color:#000;letter-spacing:-1.203px;">OSNAP</span>
<span class="t" style="left:1135.0px;top:1016.5px;font-size:12px;line-height:16px;color:#000;letter-spacing:-0.800px;">CS: Global XYZ</span>
<span class="t" style="left:1291.0px;top:1016.5px;font-size:12px;line-height:16px;color:#000;letter-spacing:-0.818px;">Plane: XY</span>
<svg class="b" style="left:1586px;top:1021px;" width="11" height="11" viewBox="0 0 11 11"><path d="M9 1v1M9 5v1M5 5v1M9 9v1M5 9v1M1 9v1" stroke="#aaa" stroke-width="2"/></svg>
<div class="b" style="left:280.5px;top:457px;width:602px;height:558.5px;background:#d2d2d7;border:1.500px solid #9c9c9c;box-sizing:border-box;border-top-color:#7c7c7c;"></div>
<div class="b" style="left:282px;top:458.3px;width:599.5px;height:24.9px;background:#fff;"></div>
<svg class="b" style="left:287.5px;top:463.5px;" width="14" height="13" viewBox="0 0 14 13"><path d="M3.800 0.800h9.500v7.800h-2.500v2l-2.500-2h-4.500z" fill="#9cc6f0"/><path d="M5.800 3.200h5.800M5.800 5.700h5.800" stroke="#fff" stroke-width="1.200"/><text x="0.300" y="12.300" font-size="7.800" font-weight="bold" fill="#e0b020" stroke="#6a5410" stroke-width=".4" font-family="Liberation Sans, sans-serif">9</text></svg>
<span class="t" style="left:306.0px;top:463.6px;font-size:10.2px;line-height:14.2px;color:#000;letter-spacing:-0.065px;">Member Divisions for Calculation</span>
<svg class="b" style="left:781px;top:469px;" width="12" height="3" viewBox="0 0 12 3"><path d="M0.500 1h10" stroke="#b8b8b8" stroke-width="1"/></svg>
<svg class="b" style="left:819.5px;top:465px;" width="10" height="10" viewBox="0 0 10 10"><rect x="0.500" y="0.500" width="8" height="8" fill="none" stroke="#111" stroke-width="1"/></svg>
<svg class="b" style="left:858px;top:465px;" width="10" height="10" viewBox="0 0 10 10"><path d="M0.500 0.500l8.500 8.500M9 0.500l-8.500 8.500" stroke="#111" stroke-width="1"/></svg>
<div class="b" style="left:289px;top:491px;width:52.5px;height:19px;background:#ececec;"></div>
<span class="t" style="left:298.5px;top:495.3px;font-size:9.4px;line-height:13.4px;color:#000;letter-spacing:0.009px;">General</span>
<div class="b" style="left:289px;top:509px;width:585.5px;height:463px;background:#ececec;"></div>
<div class="b" style="left:296.5px;top:517px;width:337px;height:741px;background:#fff;height:241px;"></div>
<div class="b" style="left:296.5px;top:767px;width:337px;height:198.5px;background:#fff;"></div>
<div class="b" style="left:642px;top:517px;width:224.5px;height:448.5px;background:#fff;"></div>
<span class="t" style="left:301.0px;top:518.0px;font-size:9.4px;line-height:13.4px;color:#3a5a98;letter-spacing:0.230px;text-shadow:0 0 .4px #3a5a98;">Member Settings</span>
<div class="b" style="left:296.5px;top:537.5px;width:334px;height:144.5px;background:#fff176;"></div>
<span class="t" style="left:301.0px;top:539.8px;font-size:9.4px;line-height:13.4px;color:#000;letter-spacing:0.167px;text-shadow:0 0 .5px rgba(0,0,0,.7);">Number of divisions for result diagrams</span>
<div class="b" style="left:301px;top:555.5px;width:47.5px;height:16px;background:#e9dc68;"></div><span class="t" style="left:321.5px;top:557.2px;font-size:10px;line-height:14px;color:#000;letter-spacing:-0.561px;">10</span><svg class="b" style="left:338.5px;top:558px;" width="6" height="11" viewBox="0 0 6 11"><polygon points="3,0.500 5.300,3.300 0.700,3.300" fill="#333"/><polygon points="3,10.500 5.300,7.700 0.700,7.700" fill="#333"/></svg>
<span class="t" style="left:301.0px;top:585.9px;font-size:9.4px;line-height:13.4px;color:#000;letter-spacing:0.138px;text-shadow:0 0 .5px rgba(0,0,0,.7);">Number of divisions for special types of members (cable, elastic foundation,</span>
<span class="t" style="left:301.0px;top:596.9px;font-size:9.4px;line-height:13.4px;color:#000;letter-spacing:0.234px;text-shadow:0 0 .5px rgba(0,0,0,.7);">taper, nonlinearity)</span>
<div class="b" style="left:301px;top:613px;width:47.5px;height:16px;background:#e9dc68;"></div><span class="t" style="left:321.5px;top:614.7px;font-size:10px;line-height:14px;color:#000;letter-spacing:-0.561px;">10</span><svg class="b" style="left:338.5px;top:615.5px;" width="6" height="11" viewBox="0 0 6 11"><polygon points="3,0.500 5.300,3.300 0.700,3.300" fill="#333"/><polygon points="3,10.500 5.300,7.700 0.700,7.700" fill="#333"/></svg>
<span class="t" style="left:301.0px;top:643.0px;font-size:9.4px;line-height:13.4px;color:#000;letter-spacing:0.190px;text-shadow:0 0 .5px rgba(0,0,0,.7);">Number of divisions for determination of max/min values</span>
<div class="b" style="left:301px;top:659px;width:47.5px;height:16px;background:#e9dc68;"></div><span class="t" style="left:321.5px;top:660.7px;font-size:10px;line-height:14px;color:#000;letter-spacing:-0.561px;">10</span><svg class="b" style="left:338.5px;top:661.5px;" width="6" height="11" viewBox="0 0 6 11"><polygon points="3,0.500 5.300,3.300 0.700,3.300" fill="#333"/><polygon points="3,10.500 5.300,7.700 0.700,7.700" fill="#333"/></svg>
<div class="b" style="left:301px;top:691.5px;width:11px;height:11px;background:#fff;border:1px solid #333;box-sizing:border-box;"></div>
<svg class="b" style="left:301px;top:691.5px;" width="11" height="11" viewBox="0 0 11 11"><path d="M2.300 5.500l2.300 2.500 4.200-5.200" fill="none" stroke="#222" stroke-width="1.100"/></svg>
<span class="t" style="left:317.0px;top:690.8px;font-size:9.4px;line-height:13.4px;color:#000;letter-spacing:0.123px;text-shadow:0 0 .5px rgba(0,0,0,.7);">Activate member divisions for large deformation analysis</span>
<svg class="b" style="left:642px;top:600px;" width="60" height="36" viewBox="642 600 60 36"><path d="M666.800 608.700L681 610.700" stroke="#d05030" stroke-width="1"/><polygon points="683.500,611 679.800,609.200 679.500,611.800" fill="#d05030"/><path d="M666.800 608.700L655 613.700" stroke="#20a040" stroke-width="1"/><polygon points="652.500,614.800 656.200,614.800 655,612.200" fill="#20a040"/><path d="M666.800 608.700V622" stroke="#3060d0" stroke-width="1"/><polygon points="666.800,624.500 665.400,621 668.200,621" fill="#3060d0"/><circle cx="666.800" cy="608.700" r="1.300" fill="#f0d020"/><text x="684.500" y="614" font-size="7" fill="#d05030" font-family="Liberation Sans, sans-serif">X</text><text x="646.500" y="618.500" font-size="7" fill="#20a040" font-family="Liberation Sans, sans-serif">Y</text><text x="664.500" y="632" font-size="7" fill="#3060d0" font-family="Liberation Sans, sans-serif">Z</text></svg>
<svg class="b" style="left:700px;top:650px;" width="115" height="115" viewBox="700 650 115 115"><path d="M710.800 674L746 658.500L806 666.400L769 684Z" stroke="#787878" stroke-width="1" stroke-dasharray="1 2.100" fill="none"/><path d="M710.800 746.400L747.300 729.700L806 739.500L769 756.500Z" stroke="#787878" stroke-width="1" stroke-dasharray="1 2.100" fill="none"/><path d="M710.800 674V746.400M747.300 660V729.700M806 666.400V739.500M769 684V756" stroke="#787878" stroke-width="1" stroke-dasharray="1 2.100" fill="none"/><path d="M747.500 657L768.800 755.500" stroke="#a9cdf2" stroke-width="7.500"/><path d="M745.500 657.500L766.800 756" stroke="#8ab6e6" stroke-width="1.500"/><path d="M747.500 657L768.800 755.500" stroke="#5a6a8a" stroke-width="1.300" stroke-dasharray="3 2.500"/><circle cx="747.7" cy="656.4" r="1.300" fill="#d83a10"/><circle cx="753.025" cy="681.3" r="1.300" fill="#f08050"/><circle cx="758.35" cy="706.2" r="1.300" fill="#f08050"/><circle cx="763.675" cy="731.1" r="1.300" fill="#f08050"/><circle cx="769" cy="756" r="1.300" fill="#d83a10"/><path d="M728.800 661.400L749.800 759" stroke="#f0a080" stroke-width=".7"/><path d="M724.8 661.9l12 -2.500" stroke="#f4b8a0" stroke-width=".7"/><circle cx="728.8" cy="661.4" r=".9" fill="#e06030"/><path d="M730.05 686.3l12 -2.500" stroke="#f4b8a0" stroke-width=".7"/><circle cx="734.05" cy="685.8" r=".9" fill="#e06030"/><path d="M735.3 710.7l12 -2.500" stroke="#f4b8a0" stroke-width=".7"/><circle cx="739.3" cy="710.2" r=".9" fill="#e06030"/><path d="M740.55 735.1l12 -2.500" stroke="#f4b8a0" stroke-width=".7"/><circle cx="744.55" cy="734.6" r=".9" fill="#e06030"/><path d="M745.8 759.5l12 -2.500" stroke="#f4b8a0" stroke-width=".7"/><circle cx="749.8" cy="759" r=".9" fill="#e06030"/><text x="726.425" y="675.6" font-size="5" fill="#e88060" font-family="Liberation Sans, sans-serif">a</text><text x="731.675" y="700" font-size="5" fill="#e88060" font-family="Liberation Sans, sans-serif">a</text><text x="736.925" y="724.4" font-size="5" fill="#e88060" font-family="Liberation Sans, sans-serif">a</text><text x="742.175" y="748.8" font-size="5" fill="#e88060" font-family="Liberation Sans, sans-serif">a</text></svg>
<div class="b" style="left:282px;top:978.7px;width:599.5px;height:35.3px;background:#fff;"></div>
<div class="b" style="left:289px;top:988px;width:20.8px;height:16.8px;background:#cce4f7;"></div>
<svg class="b" style="left:291px;top:990px;" width="18" height="13" viewBox="0 0 18 13"><rect x="1" y="0.500" width="13" height="3" fill="#80d060"/><text x="0" y="11" font-size="8" font-weight="bold" fill="#223" font-family="Liberation Sans, sans-serif">0,00</text><path d="M5 12.300h11" stroke="#2040c0" stroke-width=".8"/></svg>
<div class="b" style="left:318.3px;top:988px;width:20.8px;height:16.8px;background:#cce4f7;"></div>
<svg class="b" style="left:320.5px;top:989px;" width="17" height="15" viewBox="0 0 17 15"><rect x="1" y="1" width="6" height="8" rx="1.500" fill="#8a8a8a"/><ellipse cx="4" cy="2" rx="3" ry="1.200" fill="#b0b0b0"/><rect x="8" y="5" width="7" height="9" fill="#f4f4f4" stroke="#666" stroke-width=".9"/><path d="M9.500 8h4M9.500 10h4M9.500 12h4" stroke="#888" stroke-width=".7"/><path d="M3 10v2.500h3.500" fill="none" stroke="#444" stroke-width="1"/><polygon points="6,11 8,12.500 6,14" fill="#444"/></svg>
<div class="b" style="left:577.5px;top:989px;width:61.5px;height:16.5px;background:#e1e1e1;border:1px solid #adadad;box-sizing:border-box;"></div><span class="t" style="left:583.5px;top:991.0px;font-size:9.4px;line-height:13.4px;color:#000;letter-spacing:0.143px;text-shadow:0 0 .5px rgba(0,0,0,.6);">OK &amp; Apply</span>
<div class="b" style="left:653px;top:989px;width:68px;height:16.5px;background:#e1e1e1;border:2px solid #0078d7;box-sizing:border-box;"></div><span class="t" style="left:680.5px;top:991.0px;font-size:9.4px;line-height:13.4px;color:#000;letter-spacing:-0.291px;text-shadow:0 0 .5px rgba(0,0,0,.6);">OK</span>
<div class="b" style="left:729px;top:989px;width:68px;height:16.5px;background:#e1e1e1;border:1px solid #adadad;box-sizing:border-box;"></div><span class="t" style="left:748.8px;top:991.0px;font-size:9.4px;line-height:13.4px;color:#000;letter-spacing:-0.126px;text-shadow:0 0 .5px rgba(0,0,0,.6);">Cancel</span>
<div class="b" style="left:806px;top:989px;width:67.5px;height:16.5px;background:#e1e1e1;border:1px solid #adadad;box-sizing:border-box;"></div><span class="t" style="left:827.2px;top:991.0px;font-size:9.4px;line-height:13.4px;color:#000;letter-spacing:0.297px;text-shadow:0 0 .5px rgba(0,0,0,.6);">Apply</span>
<svg class="b" style="left:872px;top:1005px;" width="9" height="9" viewBox="0 0 9 9"><path d="M7 1v1M7 4v1M4 4v1M7 7v1M4 7v1M1 7v1" stroke="#aaa" stroke-width="1.600"/></svg>
<svg class="b" style="left:620px;top:540px;" width="380" height="80" viewBox="620 540 380 80"><g filter="url(#sh)"><path d="M644 592.800L940 576.300" stroke="#f04548" stroke-width="9.600" stroke-linecap="round"/><polygon points="937.500,561 939.500,590.500 969,574.300" fill="#f04548"/></g></svg>
</div></body></html>
